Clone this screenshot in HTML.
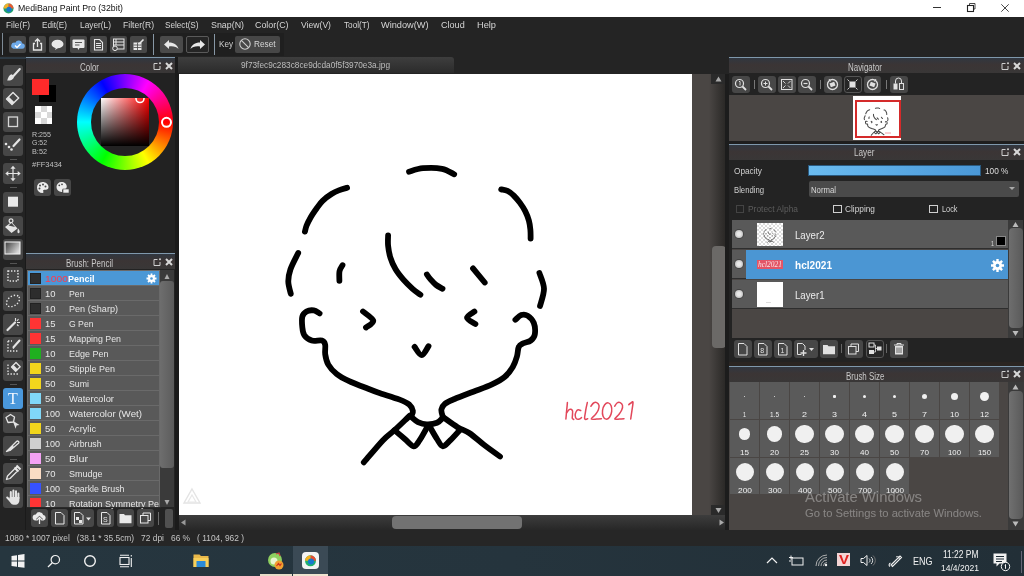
<!DOCTYPE html><html><head><meta charset="utf-8"><style>
html,body{margin:0;padding:0}
body{width:1024px;height:576px;overflow:hidden;position:relative;background:#242424;font-family:"Liberation Sans",sans-serif}
div{box-sizing:border-box}
svg{position:absolute;overflow:visible}
</style></head><body><div style="position:absolute;left:0;top:0;width:1024px;height:576px;overflow:hidden;will-change:transform;background:#242424">
<div style="position:absolute;left:0px;top:0px;width:1024px;height:17px;background:#fff"></div>
<svg style="left:3px;top:3px" width="11" height="11" viewBox="0 0 12 12"><circle cx="6" cy="6" r="5.5" fill="#22a070"/><path d="M6 .5a5.5 5.5 0 0 1 5.5 5.5H6z" fill="#e85a30"/><path d="M.5 6A5.5 5.5 0 0 1 6 .5V6z" fill="#f3b02a"/><circle cx="6.5" cy="6.8" r="2.8" fill="#1877c9"/></svg>
<div style="position:absolute;left:18px;top:2px;font-size:9.5px;line-height:12.5px;color:#111;white-space:pre;transform:scaleX(0.9205);transform-origin:0 0;">MediBang Paint Pro (32bit)</div>
<div style="position:absolute;left:933px;top:7px;width:8px;height:1px;background:#333"></div>
<svg style="left:966px;top:3px" width="10" height="10" viewBox="0 0 10 10"><path d="M3.5 2V.5h5.5v5.5H7.5" stroke="#333" stroke-width="0.9" fill="none"/><rect x="1.5" y="2.5" width="6" height="6" stroke="#222" stroke-width="1.1" fill="#fff"/></svg>
<svg style="left:1001px;top:3.5px" width="8" height="8" viewBox="0 0 8 8"><path d="M0.3 0.3L7.7 7.7M7.7 0.3L0.3 7.7" stroke="#333" stroke-width="0.9"/></svg>
<div style="position:absolute;left:0px;top:17px;width:1024px;height:40px;background:#242424"></div>
<div style="position:absolute;left:5.5px;top:18.6px;font-size:9.3px;line-height:12.3px;color:#d6d6d6;white-space:pre;transform:scaleX(0.8935);transform-origin:0 0;">File(F)</div>
<div style="position:absolute;left:41.5px;top:18.6px;font-size:9.3px;line-height:12.3px;color:#d6d6d6;white-space:pre;transform:scaleX(0.8796);transform-origin:0 0;">Edit(E)</div>
<div style="position:absolute;left:79.5px;top:18.6px;font-size:9.3px;line-height:12.3px;color:#d6d6d6;white-space:pre;transform:scaleX(0.8953);transform-origin:0 0;">Layer(L)</div>
<div style="position:absolute;left:122.5px;top:18.6px;font-size:9.3px;line-height:12.3px;color:#d6d6d6;white-space:pre;transform:scaleX(0.9232);transform-origin:0 0;">Filter(R)</div>
<div style="position:absolute;left:165.0px;top:18.6px;font-size:9.3px;line-height:12.3px;color:#d6d6d6;white-space:pre;transform:scaleX(0.8762);transform-origin:0 0;">Select(S)</div>
<div style="position:absolute;left:210.5px;top:18.6px;font-size:9.3px;line-height:12.3px;color:#d6d6d6;white-space:pre;transform:scaleX(0.9531);transform-origin:0 0;">Snap(N)</div>
<div style="position:absolute;left:255.0px;top:18.6px;font-size:9.3px;line-height:12.3px;color:#d6d6d6;white-space:pre;transform:scaleX(0.9537);transform-origin:0 0;">Color(C)</div>
<div style="position:absolute;left:300.8px;top:18.6px;font-size:9.3px;line-height:12.3px;color:#d6d6d6;white-space:pre;transform:scaleX(0.9262);transform-origin:0 0;">View(V)</div>
<div style="position:absolute;left:343.5px;top:18.6px;font-size:9.3px;line-height:12.3px;color:#d6d6d6;white-space:pre;transform:scaleX(0.8847);transform-origin:0 0;">Tool(T)</div>
<div style="position:absolute;left:381.3px;top:18.6px;font-size:9.3px;line-height:12.3px;color:#d6d6d6;white-space:pre;transform:scaleX(0.9907);transform-origin:0 0;">Window(W)</div>
<div style="position:absolute;left:441.1px;top:18.6px;font-size:9.3px;line-height:12.3px;color:#d6d6d6;white-space:pre;transform:scaleX(0.9754);transform-origin:0 0;">Cloud</div>
<div style="position:absolute;left:476.5px;top:18.6px;font-size:9.3px;line-height:12.3px;color:#d6d6d6;white-space:pre;transform:scaleX(0.9935);transform-origin:0 0;">Help</div>
<div style="position:absolute;left:0px;top:33px;width:284px;height:23px;background:#1f1f1f"></div>
<div style="position:absolute;left:2px;top:33px;width:1px;height:22px;background:#7d8a96"></div>
<div style="position:absolute;left:153px;top:34px;width:1px;height:21px;background:#8797a5"></div>
<div style="position:absolute;left:214px;top:34px;width:1px;height:21px;background:#8797a5"></div>
<div style="position:absolute;left:9px;top:36px;width:17px;height:17px;background:#474747;border-radius:2px;"></div>
<div style="position:absolute;left:29px;top:36px;width:17px;height:17px;background:#474747;border-radius:2px;"></div>
<div style="position:absolute;left:49px;top:36px;width:17px;height:17px;background:#474747;border-radius:2px;"></div>
<div style="position:absolute;left:70px;top:36px;width:17px;height:17px;background:#474747;border-radius:2px;"></div>
<div style="position:absolute;left:90px;top:36px;width:17px;height:17px;background:#474747;border-radius:2px;"></div>
<div style="position:absolute;left:110px;top:36px;width:17px;height:17px;background:#474747;border-radius:2px;"></div>
<div style="position:absolute;left:130px;top:36px;width:17px;height:17px;background:#474747;border-radius:2px;"></div>
<div style="position:absolute;left:160px;top:36px;width:23px;height:17px;background:#4a4a4a;border-radius:2px;"></div>
<div style="position:absolute;left:186px;top:36px;width:23px;height:17px;background:#252525;border-radius:2px;border:1px solid #5a5a5a"></div>
<div style="position:absolute;left:234.5px;top:36px;width:45.5px;height:17px;background:#474747;border-radius:2px;"></div>
<svg style="left:9px;top:36px" width="17" height="17" viewBox="0 0 17 17"><path d="M4.5 12.8h8.5a2.7 2.7 0 0 0 .3-5.4a3.7 3.7 0 0 0-7-.7A3 3 0 0 0 4.5 12.8z" fill="#6eaaea"/><path d="M6 9.5l2 2l3.5-3.5" stroke="#fff" stroke-width="1.4" fill="none"/></svg>
<svg style="left:29px;top:36px" width="17" height="17" viewBox="0 0 17 17"><path d="M6 7.5H4.5v6.5h8V7.5H11" stroke="#e8e8e8" stroke-width="1.3" fill="none"/><path d="M8.5 11V3M6 5.5l2.5-2.5l2.5 2.5" stroke="#e8e8e8" stroke-width="1.3" fill="none"/></svg>
<svg style="left:49px;top:36px" width="17" height="17" viewBox="0 0 17 17"><ellipse cx="8.5" cy="8" rx="6" ry="4.3" fill="#e8e8e8"/><path d="M7 11.5l-1 2.5l3-2z" fill="#e8e8e8"/></svg>
<svg style="left:70px;top:36px" width="17" height="17" viewBox="0 0 17 17"><rect x="2.5" y="3.5" width="12" height="8.5" rx="1" fill="#e8e8e8"/><path d="M7.5 12l1 2l1-2z" fill="#e8e8e8"/><path d="M5 6.5h7M5 9h4.5" stroke="#555" stroke-width="1"/></svg>
<svg style="left:90px;top:36px" width="17" height="17" viewBox="0 0 17 17"><path d="M4.5 3.5h5l3 3v7.5h-8z" stroke="#e8e8e8" stroke-width="1.1" fill="none"/><path d="M6 7.5h5M6 9.5h5M6 11.5h5" stroke="#e8e8e8" stroke-width="1"/></svg>
<svg style="left:110px;top:36px" width="17" height="17" viewBox="0 0 17 17"><rect x="3.5" y="3" width="10.5" height="10" stroke="#e8e8e8" stroke-width="1" fill="none"/><path d="M3.5 6h10.5M3.5 9h10.5M6 3v6" stroke="#e8e8e8" stroke-width="1"/><circle cx="5" cy="12.3" r="2.3" fill="#474747" stroke="#e8e8e8" stroke-width="1"/></svg>
<svg style="left:130px;top:36px" width="17" height="17" viewBox="0 0 17 17"><path d="M3.5 6.5h8v7.5h-8z" fill="#e8e8e8"/><path d="M3.5 9h8M3.5 11.5h8M7.5 6.5v7.5" stroke="#474747" stroke-width="0.8"/><path d="M9 8l4.5-4.5" stroke="#e8e8e8" stroke-width="1.6"/></svg>
<svg style="left:160px;top:36px" width="23" height="17" viewBox="0 0 23 17"><path d="M4 8.5l5-4.5v2.5c5 0 8.5 2.5 9.5 6.5c-2-2.2-5-3-9.5-2.5v2.5z" fill="#e8e8e8"/></svg>
<svg style="left:186px;top:36px" width="23" height="17" viewBox="0 0 23 17"><path d="M19 8.5l-5-4.5v2.5c-5 0-8.5 2.5-9.5 6.5c2-2.2 5-3 9.5-2.5v2.5z" fill="#e8e8e8"/></svg>
<div style="position:absolute;left:218.5px;top:37.5px;font-size:9px;line-height:12px;color:#d0d0d0;white-space:pre;transform:scaleX(0.9023);transform-origin:0 0;">Key</div>
<svg style="left:239px;top:38px" width="12" height="12" viewBox="0 0 12 12"><circle cx="6" cy="6" r="5.2" stroke="#cfcfcf" stroke-width="1.1" fill="none"/><path d="M2.4 2.4l7.2 7.2" stroke="#cfcfcf" stroke-width="1.1"/></svg>
<div style="position:absolute;left:253.5px;top:37.5px;font-size:9px;line-height:12px;color:#d8d8d8;white-space:pre;transform:scaleX(0.9143);transform-origin:0 0;">Reset</div>
<div style="position:absolute;left:0px;top:57px;width:26px;height:473px;background:#232323"></div>
<div style="position:absolute;left:0px;top:57px;width:26px;height:2px;background:#2e3a44"></div>
<div style="position:absolute;left:25px;top:59px;width:1px;height:471px;background:#1a1a1a"></div>
<div style="position:absolute;left:3px;top:65px;width:20px;height:20.5px;background:#474747;border-radius:3px"></div>
<svg style="left:3px;top:65px" width="20" height="20" viewBox="0 0 20 20"><path d="M16.8 4l-6.3 7" stroke="#e4e4e4" stroke-width="2.1" stroke-linecap="round"/><path d="M10.6 10.8l-1.8-1.5c-2 .3-3.6 2.6-4.6 6.2c2.8.3 5.2-.6 6.7-2.8z" fill="#e4e4e4"/></svg>
<div style="position:absolute;left:3px;top:88px;width:20px;height:20.5px;background:#474747;border-radius:3px"></div>
<svg style="left:3px;top:88px" width="20" height="20" viewBox="0 0 20 20"><path d="M3.5 11L10 4.5l5.7 5.5L9 16.5z" stroke="#e4e4e4" stroke-width="1.4" stroke-linejoin="round" fill="none"/><path d="M3.5 11l2.3-2.3l5.6 5.6L9 16.5z" fill="#e4e4e4"/></svg>
<div style="position:absolute;left:3px;top:111.5px;width:20px;height:20.5px;background:#474747;border-radius:3px"></div>
<svg style="left:3px;top:111.5px" width="20" height="20" viewBox="0 0 20 20"><rect x="5.5" y="5" width="9" height="9.5" stroke="#d6d6d6" stroke-width="1.3" fill="none"/></svg>
<div style="position:absolute;left:3px;top:135px;width:20px;height:20.5px;background:#474747;border-radius:3px"></div>
<svg style="left:3px;top:135px" width="20" height="20" viewBox="0 0 20 20"><path d="M16.5 4.5l-6 6.5" stroke="#e4e4e4" stroke-width="2.2" stroke-linecap="round"/><circle cx="3" cy="9" r="1.3" fill="#e4e4e4"/><circle cx="6" cy="12" r="1.3" fill="#e4e4e4"/><circle cx="8.5" cy="14.5" r="1.3" fill="#e4e4e4"/></svg>
<div style="position:absolute;left:3px;top:163px;width:20px;height:20.5px;background:#474747;border-radius:3px"></div>
<svg style="left:3px;top:163px" width="20" height="20" viewBox="0 0 20 20"><path d="M10 4v13M3.5 10.5h13" stroke="#e4e4e4" stroke-width="1.2"/><path d="M10 2.8l-2.6 3h5.2zM10 18.2l-2.6-3h5.2zM2.3 10.5l3-2.6v5.2zM17.7 10.5l-3-2.6v5.2z" fill="#e4e4e4"/></svg>
<div style="position:absolute;left:3px;top:192px;width:20px;height:20.5px;background:#474747;border-radius:3px"></div>
<svg style="left:3px;top:192px" width="20" height="20" viewBox="0 0 20 20"><rect x="5" y="4.7" width="10" height="10" fill="#eaeaea"/></svg>
<div style="position:absolute;left:3px;top:215.5px;width:20px;height:20.5px;background:#474747;border-radius:3px"></div>
<svg style="left:3px;top:215.5px" width="20" height="20" viewBox="0 0 20 20"><circle cx="8" cy="4.8" r="1.9" stroke="#e4e4e4" stroke-width="1.2" fill="none"/><path d="M2 11l6.5-5l6 6.5l-6 4.5z" fill="#e4e4e4"/><path d="M5.5 9.5l3-2.5l3.5 4z" fill="#474747"/><path d="M15 12.5c1 1 2 2.5 1.5 4c-.5 1-1.8.8-2-.3c-.2-1 .2-2.5.5-3.7z" fill="#e4e4e4"/></svg>
<div style="position:absolute;left:3px;top:239px;width:20px;height:20.5px;background:#474747;border-radius:3px"></div>
<svg style="left:3px;top:239px" width="20" height="20" viewBox="0 0 20 20"><defs><linearGradient id="gr" x1="0" y1="0" x2="1" y2="0.6"><stop offset="0" stop-color="#3a3a3a"/><stop offset="1" stop-color="#d8d8d8"/></linearGradient></defs><rect x="2" y="3" width="15" height="12" fill="url(#gr)" stroke="#eee" stroke-width="1.1"/></svg>
<div style="position:absolute;left:3px;top:267px;width:20px;height:20.5px;background:#474747;border-radius:3px"></div>
<svg style="left:3px;top:267px" width="20" height="20" viewBox="0 0 20 20"><rect x="5" y="4" width="10" height="10" stroke="#e4e4e4" stroke-width="1.4" stroke-dasharray="1.4 1.6" fill="none"/></svg>
<div style="position:absolute;left:3px;top:290.5px;width:20px;height:20.5px;background:#474747;border-radius:3px"></div>
<svg style="left:3px;top:290.5px" width="20" height="20" viewBox="0 0 20 20"><ellipse cx="10" cy="10" rx="7.2" ry="4.8" transform="rotate(-35 10 10)" stroke="#e4e4e4" stroke-width="1.4" stroke-dasharray="1.4 1.8" fill="none"/></svg>
<div style="position:absolute;left:3px;top:314px;width:20px;height:20.5px;background:#474747;border-radius:3px"></div>
<svg style="left:3px;top:314px" width="20" height="20" viewBox="0 0 20 20"><path d="M4.5 16l7.5-7.5" stroke="#e4e4e4" stroke-width="2.2" stroke-linecap="round"/><path d="M12.5 4v3M15.5 5l-1.5 2M17 8.5h-3M14 10.5l1.5 1.5" stroke="#e4e4e4" stroke-width="1.1"/></svg>
<div style="position:absolute;left:3px;top:337px;width:20px;height:20.5px;background:#474747;border-radius:3px"></div>
<svg style="left:3px;top:337px" width="20" height="20" viewBox="0 0 20 20"><path d="M5 4v10h10" stroke="#e4e4e4" stroke-width="1.3" stroke-dasharray="1.4 1.6" fill="none"/><path d="M5 4h4" stroke="#e4e4e4" stroke-width="1.3" stroke-dasharray="1.4 1.6"/><path d="M16.5 3.5l-6 6.8" stroke="#e4e4e4" stroke-width="2.1" stroke-linecap="round"/><path d="M10.3 10.5l-.6 1.5l1.5-.6z" fill="#e4e4e4"/></svg>
<div style="position:absolute;left:3px;top:360px;width:20px;height:20.5px;background:#474747;border-radius:3px"></div>
<svg style="left:3px;top:360px" width="20" height="20" viewBox="0 0 20 20"><path d="M5 4.5v9.5h10" stroke="#e4e4e4" stroke-width="1.3" stroke-dasharray="1.4 1.6" fill="none"/><path d="M8.5 7l4.5-4.5l4.2 4.2l-4.5 4.5z" stroke="#e4e4e4" stroke-width="1.3" stroke-linejoin="round" fill="none"/><path d="M8.5 7l2-2l4.2 4.2l-2 2z" fill="#e4e4e4"/></svg>
<div style="position:absolute;left:3px;top:388px;width:20px;height:20.5px;background:#4a98dc;border-radius:3px"></div>
<svg style="left:3px;top:388px" width="20" height="20" viewBox="0 0 20 20"><text x="10" y="16" text-anchor="middle" font-family="Liberation Serif" font-size="16" fill="#f4f8ff">T</text></svg>
<div style="position:absolute;left:3px;top:412px;width:20px;height:20.5px;background:#474747;border-radius:3px"></div>
<svg style="left:3px;top:412px" width="20" height="20" viewBox="0 0 20 20"><path d="M3 5.5l4.5-3l4 2.5l-1 5l-5.5.5z" stroke="#e4e4e4" stroke-width="1.3" stroke-linejoin="round" fill="none"/><path d="M9.5 8.5l7 4.5l-3 .5l-.8 3.2z" fill="#e4e4e4"/></svg>
<div style="position:absolute;left:3px;top:435.5px;width:20px;height:20.5px;background:#474747;border-radius:3px"></div>
<svg style="left:3px;top:435.5px" width="20" height="20" viewBox="0 0 20 20"><path d="M3.5 15.5l10-10c1.3-1.3 3.3.4 2 1.8L7 14.5z" stroke="#e4e4e4" stroke-width="1.3" stroke-linejoin="round" fill="none"/><path d="M3.5 15.5l6-6l1.8 1.8L7 14.5z" fill="#e4e4e4"/></svg>
<div style="position:absolute;left:3px;top:463px;width:20px;height:20.5px;background:#474747;border-radius:3px"></div>
<svg style="left:3px;top:463px" width="20" height="20" viewBox="0 0 20 20"><path d="M3.5 16.5l1-3.5l7.5-7.5l2.5 2.5l-7.5 7.5z" stroke="#e4e4e4" stroke-width="1.3" stroke-linejoin="round" fill="none"/><path d="M11.5 4.5l4 4M13.5 2.5l4 4M14.5 3.5l-2 2" stroke="#e4e4e4" stroke-width="2"/></svg>
<div style="position:absolute;left:3px;top:487px;width:20px;height:20.5px;background:#474747;border-radius:3px"></div>
<svg style="left:3px;top:487px" width="20" height="20" viewBox="0 0 20 20"><path d="M7.8 11V5M10.4 10.5V3.5M13 10.5V4.3M15.4 11.5V6.5M7 13.5L4.2 10.5" stroke="#e4e4e4" stroke-width="2" stroke-linecap="round"/><path d="M6.8 10h9.6v3.2c0 2.3-1.5 4.3-3.3 4.6h-2.5c-1.4 0-2.4-.8-3.2-2L6 13.5z" fill="#e4e4e4"/></svg>
<div style="position:absolute;left:10px;top:159px;width:7px;height:1px;background:#555"></div>
<div style="position:absolute;left:10px;top:187px;width:7px;height:1px;background:#555"></div>
<div style="position:absolute;left:10px;top:263px;width:7px;height:1px;background:#555"></div>
<div style="position:absolute;left:10px;top:384px;width:7px;height:1px;background:#555"></div>
<div style="position:absolute;left:10px;top:459px;width:7px;height:1px;background:#555"></div>
<div style="position:absolute;left:26px;top:57px;width:151px;height:1px;background:#7f98ac"></div>
<div style="position:absolute;left:26px;top:58px;width:151px;height:15px;background:linear-gradient(#313740,#3b3535 45%,#393737)"></div>
<div style="position:absolute;left:80px;top:60.5px;font-size:10px;line-height:13px;color:#c8c8c8;white-space:pre;transform:scaleX(0.7948);transform-origin:0 0;">Color</div>
<div style="position:absolute;left:26px;top:73px;width:151px;height:181px;background:#222"></div>
<svg style="left:153px;top:62px" width="20" height="8" viewBox="0 0 20 8"><path d="M4.5 1.5H1v6h6V4" stroke="#cfcfcf" stroke-width="1" fill="none"/><circle cx="7" cy="1.2" r="1" fill="#cfcfcf"/><path d="M13 1l6 6M19 1l-6 6" stroke="#d8d8d8" stroke-width="2"/></svg>
<div style="position:absolute;left:39px;top:85px;width:17px;height:17px;background:#000"></div>
<div style="position:absolute;left:32px;top:78.5px;width:16.5px;height:16px;background:#ff2a2a"></div>
<div style="position:absolute;left:35px;top:106px;width:17px;height:18px;background-color:#fff;background-image:linear-gradient(45deg,#d8d8d8 25%,transparent 25%,transparent 75%,#d8d8d8 75%),linear-gradient(45deg,#d8d8d8 25%,transparent 25%,transparent 75%,#d8d8d8 75%);background-size:12px 12px;background-position:0 0,6px 6px"></div>
<div style="position:absolute;left:32px;top:128.5px;font-size:8px;line-height:11px;color:#c0c0c0;white-space:pre;transform:scaleX(0.8895);transform-origin:0 0;">R:255</div>
<div style="position:absolute;left:32px;top:137px;font-size:8px;line-height:11px;color:#c0c0c0;white-space:pre;transform:scaleX(0.8649);transform-origin:0 0;">G:52</div>
<div style="position:absolute;left:32px;top:146px;font-size:8px;line-height:11px;color:#c0c0c0;white-space:pre;transform:scaleX(0.9108);transform-origin:0 0;">B:52</div>
<div style="position:absolute;left:32px;top:158.5px;font-size:8px;line-height:11px;color:#c0c0c0;white-space:pre;transform:scaleX(0.9366);transform-origin:0 0;">#FF3434</div>
<div style="position:absolute;left:77px;top:74px;width:96px;height:96px;border-radius:50%;background:conic-gradient(from 90deg,#f00,#ff0,#0f0,#0ff,#00f,#f0f,#f00)"></div>
<div style="position:absolute;left:91px;top:88px;width:68px;height:68px;border-radius:50%;background:#222"></div>
<div style="position:absolute;left:101px;top:98px;width:48px;height:48px;overflow:hidden;background:linear-gradient(to top,#000,rgba(0,0,0,0)),linear-gradient(to right,#fff,#f00)"><svg style="left:0;top:0" width="48" height="48"><circle cx="39" cy="0.5" r="4" stroke="#fff" stroke-width="1.6" fill="none"/></svg></div>
<svg style="left:0;top:0" width="1" height="1"><circle cx="166.5" cy="122.3" r="4.5" stroke="#fff" stroke-width="2" fill="none"/></svg>
<div style="position:absolute;left:34px;top:179px;width:17px;height:17px;background:#474747;border-radius:3px"></div>
<div style="position:absolute;left:54px;top:179px;width:17px;height:17px;background:#474747;border-radius:3px"></div>
<svg style="left:34px;top:179px" width="17" height="17" viewBox="0 0 17 17"><path d="M8.5 3a5.5 5.5 0 0 0 0 11c1 0 1.2-.8.8-1.5c-.5-.8 0-1.7 1-1.7h1.5a2.7 2.7 0 0 0 2.7-2.7C14.5 5.3 11.8 3 8.5 3z" fill="#eee"/><circle cx="6" cy="6.5" r="1" fill="#474747"/><circle cx="9" cy="5.5" r="1" fill="#474747"/><circle cx="5.5" cy="9.5" r="1" fill="#474747"/><circle cx="11.5" cy="7.5" r="1" fill="#474747"/></svg>
<svg style="left:54px;top:179px" width="17" height="17" viewBox="0 0 17 17"><path d="M7.5 3a5 5 0 0 0 0 10c.8 0 1-.7.7-1.3c-.4-.7 0-1.5.9-1.5h1.3a2.4 2.4 0 0 0 2.4-2.4C12.8 5 10.5 3 7.5 3z" fill="#eee"/><circle cx="5.3" cy="6.3" r=".9" fill="#474747"/><circle cx="8" cy="5.3" r=".9" fill="#474747"/><rect x="9" y="10" width="6" height="4" fill="#eee" stroke="#474747" stroke-width=".6"/></svg>
<div style="position:absolute;left:26px;top:253px;width:151px;height:1px;background:#7f98ac"></div>
<div style="position:absolute;left:26px;top:254px;width:151px;height:15px;background:linear-gradient(#313740,#3b3535 45%,#393737)"></div>
<div style="position:absolute;left:65.5px;top:257px;font-size:10px;line-height:13px;color:#c8c8c8;white-space:pre;transform:scaleX(0.7977);transform-origin:0 0;">Brush: Pencil</div>
<svg style="left:153px;top:258px" width="20" height="8" viewBox="0 0 20 8"><path d="M4.5 1.5H1v6h6V4" stroke="#cfcfcf" stroke-width="1" fill="none"/><circle cx="7" cy="1.2" r="1" fill="#cfcfcf"/><path d="M13 1l6 6M19 1l-6 6" stroke="#d8d8d8" stroke-width="2"/></svg>
<div style="position:absolute;left:26px;top:269px;width:151px;height:261px;background:#232323"></div>
<div style="position:absolute;left:27px;top:270px;width:133px;height:237px;background:#6a6a6a;overflow:hidden"></div>
<div style="position:absolute;left:28px;top:271px;width:131px;height:14px;background:#4b98d6;overflow:hidden"></div>
<div style="position:absolute;left:30px;top:273px;width:11px;height:11px;background:#2d2d2d;border:1px solid #222"></div>
<div style="position:absolute;left:44.5px;top:273px;font-size:9.3px;line-height:12.3px;color:#ff3a4c;white-space:pre;transform:scaleX(1.1118);transform-origin:0 0;">1000</div>
<div style="position:absolute;left:68px;top:273px;font-size:9.3px;line-height:12.3px;color:#ffffff;white-space:pre;font-weight:bold;transform:scaleX(0.9675);transform-origin:0 0;">Pencil</div>
<svg style="left:146px;top:273px" width="11" height="11" viewBox="0 0 11 11"><circle cx="5.5" cy="5.5" r="3.4" fill="#fff"/><path d="M5.5 .5v10M.5 5.5h10M2 2l7 7M9 2l-7 7" stroke="#fff" stroke-width="1.8"/><circle cx="5.5" cy="5.5" r="1.3" fill="#4b98d6"/></svg>
<div style="position:absolute;left:28px;top:286px;width:131px;height:14px;background:#595959;overflow:hidden"></div>
<div style="position:absolute;left:30px;top:288px;width:11px;height:11px;background:#2d2d2d;border:1px solid #222"></div>
<div style="position:absolute;left:44.5px;top:287.6px;font-size:9.3px;line-height:12.3px;color:#e6e6e6;white-space:pre;transform:scaleX(1.0151);transform-origin:0 0;">10</div>
<div style="position:absolute;left:68.5px;top:287.6px;font-size:9.3px;line-height:12.3px;color:#e6e6e6;white-space:pre;transform:scaleX(0.9367);transform-origin:0 0;">Pen</div>
<div style="position:absolute;left:28px;top:301px;width:131px;height:14px;background:#595959;overflow:hidden"></div>
<div style="position:absolute;left:30px;top:303px;width:11px;height:11px;background:#2d2d2d;border:1px solid #222"></div>
<div style="position:absolute;left:44.5px;top:302.6px;font-size:9.3px;line-height:12.3px;color:#e6e6e6;white-space:pre;transform:scaleX(1.0151);transform-origin:0 0;">10</div>
<div style="position:absolute;left:68.5px;top:302.6px;font-size:9.3px;line-height:12.3px;color:#e6e6e6;white-space:pre;transform:scaleX(0.9773);transform-origin:0 0;">Pen (Sharp)</div>
<div style="position:absolute;left:28px;top:316px;width:131px;height:14px;background:#595959;overflow:hidden"></div>
<div style="position:absolute;left:30px;top:318px;width:11px;height:11px;background:#ff3434"></div>
<div style="position:absolute;left:44.5px;top:317.6px;font-size:9.3px;line-height:12.3px;color:#e6e6e6;white-space:pre;transform:scaleX(1.0151);transform-origin:0 0;">15</div>
<div style="position:absolute;left:68.5px;top:317.6px;font-size:9.3px;line-height:12.3px;color:#e6e6e6;white-space:pre;transform:scaleX(0.9295);transform-origin:0 0;">G Pen</div>
<div style="position:absolute;left:28px;top:331px;width:131px;height:14px;background:#595959;overflow:hidden"></div>
<div style="position:absolute;left:30px;top:333px;width:11px;height:11px;background:#ff3434"></div>
<div style="position:absolute;left:44.5px;top:332.6px;font-size:9.3px;line-height:12.3px;color:#e6e6e6;white-space:pre;transform:scaleX(1.0151);transform-origin:0 0;">15</div>
<div style="position:absolute;left:68.5px;top:332.6px;font-size:9.3px;line-height:12.3px;color:#e6e6e6;white-space:pre;transform:scaleX(0.9490);transform-origin:0 0;">Mapping Pen</div>
<div style="position:absolute;left:28px;top:346px;width:131px;height:14px;background:#595959;overflow:hidden"></div>
<div style="position:absolute;left:30px;top:348px;width:11px;height:11px;background:#1fb01f"></div>
<div style="position:absolute;left:44.5px;top:347.6px;font-size:9.3px;line-height:12.3px;color:#e6e6e6;white-space:pre;transform:scaleX(1.0151);transform-origin:0 0;">10</div>
<div style="position:absolute;left:68.5px;top:347.6px;font-size:9.3px;line-height:12.3px;color:#e6e6e6;white-space:pre;transform:scaleX(0.9671);transform-origin:0 0;">Edge Pen</div>
<div style="position:absolute;left:28px;top:361px;width:131px;height:14px;background:#595959;overflow:hidden"></div>
<div style="position:absolute;left:30px;top:363px;width:11px;height:11px;background:#f2d61c"></div>
<div style="position:absolute;left:44.5px;top:362.6px;font-size:9.3px;line-height:12.3px;color:#e6e6e6;white-space:pre;transform:scaleX(1.0151);transform-origin:0 0;">50</div>
<div style="position:absolute;left:68.5px;top:362.6px;font-size:9.3px;line-height:12.3px;color:#e6e6e6;white-space:pre;transform:scaleX(0.9671);transform-origin:0 0;">Stipple Pen</div>
<div style="position:absolute;left:28px;top:376px;width:131px;height:14px;background:#595959;overflow:hidden"></div>
<div style="position:absolute;left:30px;top:378px;width:11px;height:11px;background:#f2d61c"></div>
<div style="position:absolute;left:44.5px;top:377.6px;font-size:9.3px;line-height:12.3px;color:#e6e6e6;white-space:pre;transform:scaleX(1.0151);transform-origin:0 0;">50</div>
<div style="position:absolute;left:68.5px;top:377.6px;font-size:9.3px;line-height:12.3px;color:#e6e6e6;white-space:pre;transform:scaleX(0.9440);transform-origin:0 0;">Sumi</div>
<div style="position:absolute;left:28px;top:391px;width:131px;height:14px;background:#595959;overflow:hidden"></div>
<div style="position:absolute;left:30px;top:393px;width:11px;height:11px;background:#80d8f8"></div>
<div style="position:absolute;left:44.5px;top:392.6px;font-size:9.3px;line-height:12.3px;color:#e6e6e6;white-space:pre;transform:scaleX(1.0151);transform-origin:0 0;">50</div>
<div style="position:absolute;left:68.5px;top:392.6px;font-size:9.3px;line-height:12.3px;color:#e6e6e6;white-space:pre;transform:scaleX(1.0088);transform-origin:0 0;">Watercolor</div>
<div style="position:absolute;left:28px;top:406px;width:131px;height:14px;background:#595959;overflow:hidden"></div>
<div style="position:absolute;left:30px;top:408px;width:11px;height:11px;background:#80d8f8"></div>
<div style="position:absolute;left:44.5px;top:407.6px;font-size:9.3px;line-height:12.3px;color:#e6e6e6;white-space:pre;transform:scaleX(0.9668);transform-origin:0 0;">100</div>
<div style="position:absolute;left:68.5px;top:407.6px;font-size:9.3px;line-height:12.3px;color:#e6e6e6;white-space:pre;transform:scaleX(1.0466);transform-origin:0 0;">Watercolor (Wet)</div>
<div style="position:absolute;left:28px;top:421px;width:131px;height:14px;background:#595959;overflow:hidden"></div>
<div style="position:absolute;left:30px;top:423px;width:11px;height:11px;background:#f2d61c"></div>
<div style="position:absolute;left:44.5px;top:422.6px;font-size:9.3px;line-height:12.3px;color:#e6e6e6;white-space:pre;transform:scaleX(1.0151);transform-origin:0 0;">50</div>
<div style="position:absolute;left:68.5px;top:422.6px;font-size:9.3px;line-height:12.3px;color:#e6e6e6;white-space:pre;transform:scaleX(0.9863);transform-origin:0 0;">Acrylic</div>
<div style="position:absolute;left:28px;top:436px;width:131px;height:14px;background:#595959;overflow:hidden"></div>
<div style="position:absolute;left:30px;top:438px;width:11px;height:11px;background:#cfcfcf"></div>
<div style="position:absolute;left:44.5px;top:437.6px;font-size:9.3px;line-height:12.3px;color:#e6e6e6;white-space:pre;transform:scaleX(0.9668);transform-origin:0 0;">100</div>
<div style="position:absolute;left:68.5px;top:437.6px;font-size:9.3px;line-height:12.3px;color:#e6e6e6;white-space:pre;transform:scaleX(0.9386);transform-origin:0 0;">Airbrush</div>
<div style="position:absolute;left:28px;top:451px;width:131px;height:14px;background:#595959;overflow:hidden"></div>
<div style="position:absolute;left:30px;top:453px;width:11px;height:11px;background:#f4a2f4"></div>
<div style="position:absolute;left:44.5px;top:452.6px;font-size:9.3px;line-height:12.3px;color:#e6e6e6;white-space:pre;transform:scaleX(1.0151);transform-origin:0 0;">50</div>
<div style="position:absolute;left:68.5px;top:452.6px;font-size:9.3px;line-height:12.3px;color:#e6e6e6;white-space:pre;transform:scaleX(1.1483);transform-origin:0 0;">Blur</div>
<div style="position:absolute;left:28px;top:466px;width:131px;height:14px;background:#595959;overflow:hidden"></div>
<div style="position:absolute;left:30px;top:468px;width:11px;height:11px;background:#fadcc4"></div>
<div style="position:absolute;left:44.5px;top:467.6px;font-size:9.3px;line-height:12.3px;color:#e6e6e6;white-space:pre;transform:scaleX(1.0151);transform-origin:0 0;">70</div>
<div style="position:absolute;left:68.5px;top:467.6px;font-size:9.3px;line-height:12.3px;color:#e6e6e6;white-space:pre;transform:scaleX(0.9671);transform-origin:0 0;">Smudge</div>
<div style="position:absolute;left:28px;top:481px;width:131px;height:14px;background:#595959;overflow:hidden"></div>
<div style="position:absolute;left:30px;top:483px;width:11px;height:11px;background:#3652ff"></div>
<div style="position:absolute;left:44.5px;top:482.6px;font-size:9.3px;line-height:12.3px;color:#e6e6e6;white-space:pre;transform:scaleX(0.9668);transform-origin:0 0;">100</div>
<div style="position:absolute;left:68.5px;top:482.6px;font-size:9.3px;line-height:12.3px;color:#e6e6e6;white-space:pre;transform:scaleX(0.9502);transform-origin:0 0;">Sparkle Brush</div>
<div style="position:absolute;left:28px;top:496px;width:131px;height:11px;background:#595959;overflow:hidden"></div>
<div style="position:absolute;left:30px;top:498px;width:11px;height:9px;background:#ff3434"></div>
<div style="position:absolute;left:44.5px;top:497.6px;font-size:9.3px;line-height:12.3px;color:#e6e6e6;white-space:pre;transform:scaleX(1.0151);transform-origin:0 0;">10</div>
<div style="position:absolute;left:68.5px;top:497.6px;font-size:9.3px;line-height:12.3px;color:#e6e6e6;white-space:pre;transform:scaleX(0.9676);transform-origin:0 0;">Rotation Symmetry Pe</div>
<div style="position:absolute;left:27px;top:507px;width:134px;height:1px;background:#2a2a2a"></div>
<div style="position:absolute;left:160px;top:270px;width:14px;height:237px;background:#3a3a3a"></div>
<svg style="left:160px;top:272px" width="14" height="8" viewBox="0 0 14 8"><path d="M4.5 7h5l-2.5-5z" fill="#aaa"/></svg>
<div style="position:absolute;left:160px;top:281px;width:13.5px;height:187px;background:linear-gradient(to right,#6e6e6e,#5c5c5c);border-radius:3px"></div>
<svg style="left:160px;top:499px" width="14" height="8" viewBox="0 0 14 8"><path d="M4.5 1h5l-2.5 5z" fill="#aaa"/></svg>
<div style="position:absolute;left:175px;top:57px;width:4px;height:473px;background:#1b1b1b"></div>
<div style="position:absolute;left:31px;top:509px;width:17px;height:18px;background:#474747;border-radius:3px"></div>
<div style="position:absolute;left:51px;top:509px;width:17px;height:18px;background:#474747;border-radius:3px"></div>
<div style="position:absolute;left:96.5px;top:509px;width:17px;height:18px;background:#474747;border-radius:3px"></div>
<div style="position:absolute;left:117px;top:509px;width:17px;height:18px;background:#474747;border-radius:3px"></div>
<div style="position:absolute;left:137px;top:509px;width:17px;height:18px;background:#474747;border-radius:3px"></div>
<div style="position:absolute;left:71px;top:509px;width:23px;height:18px;background:#474747;border-radius:3px"></div>
<svg style="left:31px;top:509px" width="17" height="18" viewBox="0 0 17 18"><path d="M4.5 11.5a3 3 0 0 1 .3-6a4 4 0 0 1 7.5.5a2.8 2.8 0 0 1 .2 5.5z" fill="#e8e8e8"/><path d="M8.5 15V8.5M6 11l2.5-2.5l2.5 2.5" stroke="#474747" stroke-width="2.6" fill="none"/><path d="M8.5 15V8.5M6 11l2.5-2.5l2.5 2.5" stroke="#e8e8e8" stroke-width="1.3" fill="none"/></svg>
<svg style="left:51px;top:509px" width="17" height="18" viewBox="0 0 17 18"><path d="M4.5 3.5h5.5l3 3v8.5h-8.5z" stroke="#e8e8e8" stroke-width="1" fill="none"/></svg>
<svg style="left:71px;top:509px" width="23" height="18" viewBox="0 0 23 18"><path d="M3.5 3.5h5.5l3 3v8.5h-8.5z" stroke="#e8e8e8" stroke-width="1" fill="none"/><rect x="5" y="8" width="3" height="3" fill="#e8e8e8"/><rect x="8" y="11" width="3" height="3" fill="#e8e8e8"/><path d="M15 8.5h5l-2.5 3z" fill="#e8e8e8"/></svg>
<svg style="left:96.5px;top:509px" width="17" height="18" viewBox="0 0 17 18"><path d="M4.5 3.5h5.5l3 3v8.5h-8.5z" stroke="#e8e8e8" stroke-width="1" fill="none"/><text x="6" y="13" font-size="7" fill="#e8e8e8" font-family="Liberation Sans">S</text></svg>
<svg style="left:117px;top:509px" width="17" height="18" viewBox="0 0 17 18"><path d="M2.5 5h4.5l1 1.3h6.5v8h-12z" fill="#e8e8e8"/></svg>
<svg style="left:137px;top:509px" width="17" height="18" viewBox="0 0 17 18"><rect x="3.5" y="6.5" width="7.5" height="7.5" stroke="#e8e8e8" stroke-width="1" fill="none"/><path d="M6 6.5V4h7.5v7.5H11" stroke="#e8e8e8" stroke-width="1" fill="none"/></svg>
<div style="position:absolute;left:158px;top:512px;width:1px;height:13px;background:#6a6a6a"></div>
<div style="position:absolute;left:165px;top:509px;width:8px;height:19px;background:#505050;border-radius:2px"></div>
<div style="position:absolute;left:179px;top:57px;width:547px;height:17px;background:#242424"></div>
<div style="position:absolute;left:178px;top:57px;width:276px;height:16px;background:linear-gradient(#3e3e3e,#2b2b2b);border-radius:0 3px 0 0"></div>
<div style="position:absolute;left:241px;top:58.5px;font-size:9px;line-height:12px;color:#bdbdbd;white-space:pre;transform:scaleX(0.9190);transform-origin:0 0;">9f73fec9c283c8ce9dcda0f5f3970e3a.jpg</div>
<div style="position:absolute;left:179px;top:74px;width:513px;height:441px;background:#fff"></div>
<div style="position:absolute;left:692px;top:74px;width:34px;height:441px;background:linear-gradient(to right,#4a4644 50%,#2c2a28 95%)"></div>
<div style="position:absolute;left:711px;top:74px;width:15px;height:10px;background:#2a2a2a"></div>
<svg style="left:711px;top:74px" width="15" height="10" viewBox="0 0 15 10"><path d="M4.5 7.5h6l-3-5z" fill="#aaa"/></svg>
<div style="position:absolute;left:711.5px;top:245.5px;width:14px;height:102px;background:#6b6967;border-radius:4px"></div>
<div style="position:absolute;left:711px;top:505px;width:15px;height:10px;background:#2a2a2a"></div>
<svg style="left:711px;top:505px" width="15" height="10" viewBox="0 0 15 10"><path d="M4.5 3h6l-3 5z" fill="#aaa"/></svg>
<div style="position:absolute;left:179px;top:515px;width:547px;height:15px;background:linear-gradient(#3d3d3d,#272727)"></div>
<div style="position:absolute;left:179px;top:529.5px;width:547px;height:1px;background:#555"></div>
<svg style="left:179px;top:515px" width="10" height="15" viewBox="0 0 10 15"><path d="M6.5 4.5v6l-4.5-3z" fill="#999"/></svg>
<svg style="left:716px;top:515px" width="10" height="15" viewBox="0 0 10 15"><path d="M3.5 4.5v6l4.5-3z" fill="#aaa"/></svg>
<div style="position:absolute;left:392px;top:516px;width:130px;height:13px;background:#727272;border-radius:4px"></div>
<div style="position:absolute;left:725px;top:74px;width:4px;height:456px;background:#1c1c1c"></div>
<svg style="left:182px;top:487px" width="20" height="18" viewBox="0 0 20 18"><path d="M10 2l8 14H2z" stroke="#e4e4e4" stroke-width="1.4" fill="none"/><path d="M10 8l4 7H6z" stroke="#e8e8e8" stroke-width="1.2" fill="none"/></svg>
<svg style="left:0;top:0" width="1024" height="576"><g fill="none" stroke="#000" stroke-width="5.8" stroke-linecap="round" stroke-linejoin="round"><path d="M347.1 187.8C345.7 188.2 341.4 189.4 338.8 190.4C336.1 191.4 334.2 192.3 331.5 194.0C328.8 195.7 325.0 198.5 322.6 200.8C320.2 203.1 318.9 205.2 316.9 208.0C314.9 210.8 312.3 214.5 310.6 217.5C308.9 220.5 307.4 223.5 306.5 225.8C305.6 228.2 305.2 230.6 304.9 231.6"/><path d="M409.0 171.7C411.3 171.1 417.5 168.7 423.0 168.2C428.5 167.7 436.8 167.7 442.0 168.8C447.2 169.8 452.2 173.4 454.2 174.3"/><path d="M501.2 189.4C502.3 189.7 505.4 189.9 507.5 190.9C509.6 191.9 511.7 193.6 513.8 195.6C515.8 197.6 518.1 200.3 520.0 202.9C521.9 205.5 523.7 208.3 525.2 211.2C526.7 214.2 528.0 217.5 528.9 220.6C529.8 223.7 530.1 227.0 530.4 230.0C530.7 233.0 530.6 237.1 530.6 238.5"/><path d="M298.2 253.0C296.9 255.8 292.0 264.7 290.4 269.5C288.8 274.3 288.2 277.6 288.3 281.7C288.4 285.8 290.4 291.8 290.8 293.8"/><path d="M342.5 265.2C342.0 266.2 340.0 268.6 339.5 271.2C339.0 273.9 339.4 279.2 339.4 280.8"/><path d="M388.1 235.4C388.1 237.1 387.7 242.1 388.1 245.8C388.5 249.5 389.1 253.7 390.4 257.6C391.6 261.5 393.4 265.6 395.6 269.3C397.8 273.0 400.6 276.4 403.4 279.7C406.2 282.9 409.8 286.3 412.6 288.8C415.4 291.3 419.1 293.7 420.4 294.7"/><path d="M426.9 274.5C427.5 275.4 429.3 278.0 430.8 279.7C432.3 281.4 434.1 283.4 436.0 284.9C437.9 286.4 441.4 288.1 442.5 288.8"/><path d="M473.0 268.4L484.7 282.5"/><path d="M539.4 273.0C540.2 275.6 543.9 283.2 544.0 288.8C544.1 294.2 540.7 303.1 540.0 306.0"/><path d="M363.0 311.5C364.7 313.1 372.8 318.1 373.3 320.8C373.8 323.5 367.2 326.4 366.0 327.5"/><path d="M474.4 311.5C473.2 312.5 466.8 315.6 467.0 317.7C467.2 319.8 474.0 322.9 475.4 324.0"/><path d="M414.6 346.9C415.8 348.3 419.4 355.3 421.7 355.2C424.0 355.1 427.4 347.7 428.5 346.2"/><path d="M319.6 313.5C318.6 313.0 315.9 310.7 313.8 310.4C311.6 310.1 308.4 310.4 306.5 311.5C304.6 312.6 303.0 314.1 302.3 316.7C301.6 319.3 302.0 323.9 302.3 327.0C302.6 330.1 302.8 333.1 304.4 335.4C306.0 337.7 308.8 339.7 311.7 340.6C314.6 341.5 319.8 339.9 322.0 340.6C324.2 341.3 324.7 342.5 325.2 344.8C325.7 347.1 324.7 350.9 325.2 354.2C325.7 357.5 326.4 361.3 328.3 364.6C330.2 367.9 333.2 371.2 336.7 374.0C340.2 376.8 344.5 379.0 349.2 381.2C353.9 383.5 360.2 385.6 365.0 387.5C369.8 389.4 372.3 390.5 378.0 392.5C383.7 394.5 393.8 397.4 399.0 399.4C404.2 401.4 406.9 402.6 409.2 404.5C411.5 406.4 412.5 409.2 412.9 411.1C413.3 413.0 411.6 415.2 411.4 416.0"/><path d="M411.4 417.0C412.5 417.9 415.4 420.9 418.0 422.1C420.6 423.3 423.6 424.2 426.8 424.3C430.0 424.4 434.3 423.9 437.0 422.8C439.7 421.7 441.9 418.6 442.9 417.7"/><path d="M442.9 417.0C442.6 415.8 441.0 411.8 441.4 409.6C441.8 407.4 442.8 405.6 445.0 403.8C447.2 402.0 449.9 401.0 454.6 399.0C459.3 397.0 467.1 394.1 473.3 391.7C479.5 389.3 486.8 386.8 492.0 384.4C497.2 381.9 501.1 379.9 504.6 377.0C508.1 374.1 510.8 370.2 512.9 366.7C515.0 363.2 516.0 359.6 517.0 356.2C518.0 352.9 517.7 349.1 518.8 346.9C519.8 344.7 521.3 344.4 523.3 343.3C525.3 342.2 528.7 342.1 530.6 340.6C532.5 339.1 534.3 337.3 534.8 334.4C535.3 331.4 535.0 326.0 533.8 322.9C532.5 319.8 529.6 316.9 527.5 315.6C525.4 314.3 523.3 314.3 521.2 315.0C519.2 315.7 516.4 319.0 515.4 319.8"/><path d="M363.8 462.4C367.0 458.7 377.7 445.8 382.8 440.4C387.9 435.0 390.0 434.3 394.5 430.2C399.0 426.1 407.4 417.9 410.0 415.5"/><path d="M394.5 430.2C396.2 431.7 401.6 436.3 404.8 439.0C408.0 441.7 411.2 446.1 413.6 446.3C416.1 446.5 417.2 443.7 419.5 440.4C421.8 437.1 426.2 428.8 427.5 426.5"/><path d="M429.7 426.5C430.9 428.6 434.8 435.7 437.0 439.0C439.2 442.3 440.7 446.1 442.9 446.3C445.1 446.5 447.4 443.1 450.2 440.4C453.0 437.7 458.1 431.9 459.7 430.2"/><path d="M442.9 417.0C445.3 418.7 453.1 424.5 457.5 427.2C461.9 429.9 464.9 430.1 469.2 433.0C473.6 435.9 478.8 440.9 483.9 444.8C489.0 448.7 497.3 454.6 500.0 456.5"/></g></svg>
<svg style="left:0;top:0" width="1024" height="576"><g fill="none" stroke="#e2475a" stroke-width="1.5" stroke-linecap="round" stroke-linejoin="round"><path d="M567.4 402.6C567.3 404.0 566.9 408.3 566.6 411.0C566.4 413.7 566.0 417.7 565.9 419.0"/><path d="M566.6 412.8C567.0 412.3 568.3 410.3 569.0 409.7C569.7 409.1 570.4 409.1 571.0 409.3C571.6 409.5 572.2 409.9 572.5 410.8C572.8 411.7 572.5 413.5 572.5 414.8C572.5 416.0 572.1 417.5 572.3 418.3C572.5 419.1 573.5 419.2 573.7 419.4"/><path d="M580.7 410.5C580.2 410.4 578.8 409.4 578.0 409.7C577.2 409.9 576.5 411.0 576.0 412.0C575.5 413.0 575.1 414.4 575.2 415.5C575.3 416.6 575.7 418.1 576.4 418.7C577.1 419.3 578.6 419.2 579.5 419.0C580.4 418.8 581.2 417.8 581.5 417.5"/><path d="M587.3 402.6C587.1 403.5 586.6 405.7 586.2 407.7C585.8 409.7 585.3 413.0 585.0 414.8C584.7 416.5 584.5 417.5 584.6 418.3C584.7 419.1 585.3 419.3 585.8 419.4C586.3 419.5 587.4 418.8 587.7 418.7"/><path d="M590.9 406.2C591.4 405.7 592.6 403.6 593.6 403.0C594.6 402.4 595.8 402.2 596.7 402.6C597.6 403.0 598.7 404.2 599.0 405.4C599.3 406.6 598.9 408.4 598.3 410.0C597.7 411.6 596.4 413.2 595.2 414.8C594.0 416.2 591.0 418.3 591.2 419.0C591.5 419.7 595.0 419.1 596.7 419.0C598.4 418.9 600.6 418.8 601.4 418.7"/><path d="M614.7 406.2C615.1 405.7 616.1 403.6 617.0 403.0C617.9 402.4 619.3 402.2 620.2 402.6C621.1 403.0 622.2 404.2 622.5 405.4C622.8 406.6 622.4 408.4 621.7 410.0C621.1 411.6 619.8 413.2 618.6 414.8C617.4 416.2 614.6 418.3 614.7 419.0C614.8 419.7 617.9 419.1 619.4 419.0C620.9 418.9 623.2 418.8 624.0 418.7"/><path d="M628.8 404.6C629.1 404.3 630.3 403.4 631.0 403.0C631.7 402.6 632.9 400.9 633.0 402.2C633.1 403.6 632.3 408.0 631.9 410.8C631.5 413.6 630.9 417.6 630.7 419.0"/><ellipse cx="607.1" cy="411" rx="4.6" ry="8.2" transform="rotate(8 607.1 411)"/></g></svg>
<div style="position:absolute;left:729px;top:57px;width:295px;height:473px;background:#232323"></div>
<div style="position:absolute;left:729px;top:57px;width:295px;height:1px;background:#7f98ac"></div>
<div style="position:absolute;left:729px;top:58px;width:295px;height:15px;background:linear-gradient(#313740,#3b3535 45%,#393737)"></div>
<div style="position:absolute;left:847.5px;top:60.5px;font-size:10px;line-height:13px;color:#c8c8c8;white-space:pre;transform:scaleX(0.7942);transform-origin:0 0;">Navigator</div>
<svg style="left:1001px;top:62px" width="20" height="8" viewBox="0 0 20 8"><path d="M4.5 1.5H1v6h6V4" stroke="#cfcfcf" stroke-width="1" fill="none"/><circle cx="7" cy="1.2" r="1" fill="#cfcfcf"/><path d="M13 1l6 6M19 1l-6 6" stroke="#d8d8d8" stroke-width="2"/></svg>
<div style="position:absolute;left:732px;top:76px;width:17.5px;height:17px;background:#474747;border-radius:3px;"></div>
<div style="position:absolute;left:758px;top:76px;width:17.5px;height:17px;background:#474747;border-radius:3px;"></div>
<div style="position:absolute;left:778.3px;top:76px;width:17.5px;height:17px;background:#474747;border-radius:3px;"></div>
<div style="position:absolute;left:798.3px;top:76px;width:17.5px;height:17px;background:#474747;border-radius:3px;"></div>
<div style="position:absolute;left:824px;top:76px;width:17.5px;height:17px;background:#474747;border-radius:3px;"></div>
<div style="position:absolute;left:863.9px;top:76px;width:17.5px;height:17px;background:#474747;border-radius:3px;"></div>
<div style="position:absolute;left:890.3px;top:76px;width:17.5px;height:17px;background:#474747;border-radius:3px;"></div>
<div style="position:absolute;left:844.4px;top:76px;width:17.5px;height:17px;background:#262626;border-radius:3px;border:1px solid #555"></div>
<div style="position:absolute;left:753.5px;top:80px;width:1px;height:9px;background:#777"></div>
<div style="position:absolute;left:819.5px;top:80px;width:1px;height:9px;background:#777"></div>
<div style="position:absolute;left:885.5px;top:80px;width:1px;height:9px;background:#777"></div>
<svg style="left:732px;top:76px" width="18" height="17" viewBox="0 0 18 17"><circle cx="7.5" cy="7.5" r="4" stroke="#e0e0e0" stroke-width="1.2" fill="none"/><path d="M10.5 10.5l3.5 3.5" stroke="#e0e0e0" stroke-width="1.8"/><path d="M7 5.5h1v4" stroke="#e0e0e0" stroke-width="1"/></svg>
<svg style="left:758px;top:76px" width="18" height="17" viewBox="0 0 18 17"><circle cx="7.5" cy="7.5" r="4" stroke="#e0e0e0" stroke-width="1.2" fill="none"/><path d="M10.5 10.5l3.5 3.5" stroke="#e0e0e0" stroke-width="1.8"/><path d="M5.5 7.5h4M7.5 5.5v4" stroke="#e0e0e0" stroke-width="1"/></svg>
<svg style="left:778.3px;top:76px" width="18" height="17" viewBox="0 0 18 17"><rect x="3.5" y="3.5" width="10.5" height="10" stroke="#e0e0e0" stroke-width="1" fill="none"/><path d="M5 5l2.5 2.5M12.5 5L10 7.5M5 12l2.5-2.5M12.5 12L10 9.5" stroke="#e0e0e0" stroke-width="0.9"/></svg>
<svg style="left:798.3px;top:76px" width="18" height="17" viewBox="0 0 18 17"><circle cx="7.5" cy="7.5" r="4" stroke="#e0e0e0" stroke-width="1.2" fill="none"/><path d="M10.5 10.5l3.5 3.5" stroke="#e0e0e0" stroke-width="1.8"/><path d="M5.5 7.5h4" stroke="#e0e0e0" stroke-width="1.2"/></svg>
<svg style="left:824px;top:76px" width="17" height="17" viewBox="0 0 17 17"><circle cx="8.5" cy="8.5" r="5" stroke="#e0e0e0" stroke-width="1.3" fill="none"/><rect x="6" y="6.5" width="5" height="4" transform="rotate(-20 8.5 8.5)" fill="#e0e0e0"/><path d="M5 3l1.5 2.5" stroke="#e0e0e0" stroke-width="1"/></svg>
<svg style="left:844.4px;top:76px" width="17" height="17" viewBox="0 0 17 17"><rect x="5.5" y="5.5" width="6" height="6" fill="#e0e0e0"/><path d="M3.5 3.5l1.8 1.8M13.5 3.5l-1.8 1.8M3.5 13.5l1.8-1.8M13.5 13.5l-1.8-1.8" stroke="#e0e0e0" stroke-width="0.9"/></svg>
<svg style="left:863.9px;top:76px" width="17" height="17" viewBox="0 0 17 17"><circle cx="8.5" cy="8.5" r="5" stroke="#e0e0e0" stroke-width="1.3" fill="none"/><rect x="6" y="6.5" width="5" height="4" transform="rotate(20 8.5 8.5)" fill="#e0e0e0"/><path d="M12 3l-1.5 2.5" stroke="#e0e0e0" stroke-width="1"/></svg>
<svg style="left:890.3px;top:76px" width="17" height="17" viewBox="0 0 17 17"><rect x="3.5" y="7.5" width="4" height="6" fill="#e0e0e0"/><rect x="9.5" y="7.5" width="4" height="6" stroke="#e0e0e0" stroke-width="1" fill="none"/><path d="M5.5 7.5V5a3 3 0 0 1 6 0v2.5" stroke="#e0e0e0" stroke-width="1" fill="none"/></svg>
<div style="position:absolute;left:729px;top:95px;width:295px;height:46px;background:#4a4644"></div>
<div style="position:absolute;left:853px;top:96px;width:47.5px;height:44px;background:#fff"></div>
<div style="position:absolute;left:855px;top:100px;width:46px;height:38px;border:2px solid #d42a2a"></div>
<svg style="left:853px;top:96px" width="47" height="44" viewBox="0 0 47 44"><g transform="translate(-15.6 -3.7) scale(0.093)" fill="none" stroke="#4a4a4a" stroke-width="11" stroke-linecap="round"><path d="M347.1 187.8C345.7 188.2 341.4 189.4 338.8 190.4C336.1 191.4 334.2 192.3 331.5 194.0C328.8 195.7 325.0 198.5 322.6 200.8C320.2 203.1 318.9 205.2 316.9 208.0C314.9 210.8 312.3 214.5 310.6 217.5C308.9 220.5 307.4 223.5 306.5 225.8C305.6 228.2 305.2 230.6 304.9 231.6"/><path d="M409.0 171.7C411.3 171.1 417.5 168.7 423.0 168.2C428.5 167.7 436.8 167.7 442.0 168.8C447.2 169.8 452.2 173.4 454.2 174.3"/><path d="M501.2 189.4C502.3 189.7 505.4 189.9 507.5 190.9C509.6 191.9 511.7 193.6 513.8 195.6C515.8 197.6 518.1 200.3 520.0 202.9C521.9 205.5 523.7 208.3 525.2 211.2C526.7 214.2 528.0 217.5 528.9 220.6C529.8 223.7 530.1 227.0 530.4 230.0C530.7 233.0 530.6 237.1 530.6 238.5"/><path d="M298.2 253.0C296.9 255.8 292.0 264.7 290.4 269.5C288.8 274.3 288.2 277.6 288.3 281.7C288.4 285.8 290.4 291.8 290.8 293.8"/><path d="M342.5 265.2C342.0 266.2 340.0 268.6 339.5 271.2C339.0 273.9 339.4 279.2 339.4 280.8"/><path d="M388.1 235.4C388.1 237.1 387.7 242.1 388.1 245.8C388.5 249.5 389.1 253.7 390.4 257.6C391.6 261.5 393.4 265.6 395.6 269.3C397.8 273.0 400.6 276.4 403.4 279.7C406.2 282.9 409.8 286.3 412.6 288.8C415.4 291.3 419.1 293.7 420.4 294.7"/><path d="M426.9 274.5C427.5 275.4 429.3 278.0 430.8 279.7C432.3 281.4 434.1 283.4 436.0 284.9C437.9 286.4 441.4 288.1 442.5 288.8"/><path d="M473.0 268.4L484.7 282.5"/><path d="M539.4 273.0C540.2 275.6 543.9 283.2 544.0 288.8C544.1 294.2 540.7 303.1 540.0 306.0"/><path d="M363.0 311.5C364.7 313.1 372.8 318.1 373.3 320.8C373.8 323.5 367.2 326.4 366.0 327.5"/><path d="M474.4 311.5C473.2 312.5 466.8 315.6 467.0 317.7C467.2 319.8 474.0 322.9 475.4 324.0"/><path d="M414.6 346.9C415.8 348.3 419.4 355.3 421.7 355.2C424.0 355.1 427.4 347.7 428.5 346.2"/><path d="M319.6 313.5C318.6 313.0 315.9 310.7 313.8 310.4C311.6 310.1 308.4 310.4 306.5 311.5C304.6 312.6 303.0 314.1 302.3 316.7C301.6 319.3 302.0 323.9 302.3 327.0C302.6 330.1 302.8 333.1 304.4 335.4C306.0 337.7 308.8 339.7 311.7 340.6C314.6 341.5 319.8 339.9 322.0 340.6C324.2 341.3 324.7 342.5 325.2 344.8C325.7 347.1 324.7 350.9 325.2 354.2C325.7 357.5 326.4 361.3 328.3 364.6C330.2 367.9 333.2 371.2 336.7 374.0C340.2 376.8 344.5 379.0 349.2 381.2C353.9 383.5 360.2 385.6 365.0 387.5C369.8 389.4 372.3 390.5 378.0 392.5C383.7 394.5 393.8 397.4 399.0 399.4C404.2 401.4 406.9 402.6 409.2 404.5C411.5 406.4 412.5 409.2 412.9 411.1C413.3 413.0 411.6 415.2 411.4 416.0"/><path d="M411.4 417.0C412.5 417.9 415.4 420.9 418.0 422.1C420.6 423.3 423.6 424.2 426.8 424.3C430.0 424.4 434.3 423.9 437.0 422.8C439.7 421.7 441.9 418.6 442.9 417.7"/><path d="M442.9 417.0C442.6 415.8 441.0 411.8 441.4 409.6C441.8 407.4 442.8 405.6 445.0 403.8C447.2 402.0 449.9 401.0 454.6 399.0C459.3 397.0 467.1 394.1 473.3 391.7C479.5 389.3 486.8 386.8 492.0 384.4C497.2 381.9 501.1 379.9 504.6 377.0C508.1 374.1 510.8 370.2 512.9 366.7C515.0 363.2 516.0 359.6 517.0 356.2C518.0 352.9 517.7 349.1 518.8 346.9C519.8 344.7 521.3 344.4 523.3 343.3C525.3 342.2 528.7 342.1 530.6 340.6C532.5 339.1 534.3 337.3 534.8 334.4C535.3 331.4 535.0 326.0 533.8 322.9C532.5 319.8 529.6 316.9 527.5 315.6C525.4 314.3 523.3 314.3 521.2 315.0C519.2 315.7 516.4 319.0 515.4 319.8"/><path d="M363.8 462.4C367.0 458.7 377.7 445.8 382.8 440.4C387.9 435.0 390.0 434.3 394.5 430.2C399.0 426.1 407.4 417.9 410.0 415.5"/><path d="M394.5 430.2C396.2 431.7 401.6 436.3 404.8 439.0C408.0 441.7 411.2 446.1 413.6 446.3C416.1 446.5 417.2 443.7 419.5 440.4C421.8 437.1 426.2 428.8 427.5 426.5"/><path d="M429.7 426.5C430.9 428.6 434.8 435.7 437.0 439.0C439.2 442.3 440.7 446.1 442.9 446.3C445.1 446.5 447.4 443.1 450.2 440.4C453.0 437.7 458.1 431.9 459.7 430.2"/><path d="M442.9 417.0C445.3 418.7 453.1 424.5 457.5 427.2C461.9 429.9 464.9 430.1 469.2 433.0C473.6 435.9 478.8 440.9 483.9 444.8C489.0 448.7 497.3 454.6 500.0 456.5"/></g><path d="M32 37h6" stroke="#f4a0a8" stroke-width="1"/></svg>
<div style="position:absolute;left:729px;top:141px;width:295px;height:3px;background:#1e1e1e"></div>
<div style="position:absolute;left:729px;top:144px;width:295px;height:1px;background:#7f98ac"></div>
<div style="position:absolute;left:729px;top:145px;width:295px;height:15px;background:linear-gradient(#313740,#3b3535 45%,#393737)"></div>
<div style="position:absolute;left:854px;top:146px;font-size:10px;line-height:13px;color:#c8c8c8;white-space:pre;transform:scaleX(0.8195);transform-origin:0 0;">Layer</div>
<svg style="left:1001px;top:148px" width="20" height="8" viewBox="0 0 20 8"><path d="M4.5 1.5H1v6h6V4" stroke="#cfcfcf" stroke-width="1" fill="none"/><circle cx="7" cy="1.2" r="1" fill="#cfcfcf"/><path d="M13 1l6 6M19 1l-6 6" stroke="#d8d8d8" stroke-width="2"/></svg>
<div style="position:absolute;left:729px;top:160px;width:295px;height:206px;background:#232323"></div>
<div style="position:absolute;left:733.5px;top:165px;font-size:9px;line-height:12px;color:#cfcfcf;white-space:pre;transform:scaleX(0.9176);transform-origin:0 0;">Opacity</div>
<div style="position:absolute;left:807.5px;top:164.5px;width:173px;height:11.5px;background:linear-gradient(to right,#6bbcf0,#4a98d8);border:1px solid #2a5a80"></div>
<div style="position:absolute;left:985px;top:165px;font-size:9px;line-height:12px;color:#dcdcdc;white-space:pre;transform:scaleX(0.9204);transform-origin:0 0;">100 %</div>
<div style="position:absolute;left:733.5px;top:183.5px;font-size:9px;line-height:12px;color:#cfcfcf;white-space:pre;transform:scaleX(0.8564);transform-origin:0 0;">Blending</div>
<div style="position:absolute;left:809px;top:181px;width:210px;height:15.5px;background:#4a4a4a;border-radius:2px"></div>
<div style="position:absolute;left:810.5px;top:183.5px;font-size:9px;line-height:12px;color:#d8d8d8;white-space:pre;transform:scaleX(0.8616);transform-origin:0 0;">Normal</div>
<svg style="left:1008px;top:186px" width="8" height="5" viewBox="0 0 8 5"><path d="M1 1h6l-3 3z" fill="#aaa"/></svg>
<div style="position:absolute;left:736px;top:205px;width:7.5px;height:8px;border:1px solid #444"></div>
<div style="position:absolute;left:748px;top:202.5px;font-size:9px;line-height:12px;color:#5c5c5c;white-space:pre;transform:scaleX(0.9338);transform-origin:0 0;">Protect Alpha</div>
<div style="position:absolute;left:832.5px;top:204.5px;width:9px;height:8.5px;border:1px solid #cfcfcf"></div>
<div style="position:absolute;left:845px;top:202.5px;font-size:9px;line-height:12px;color:#d4d4d4;white-space:pre;transform:scaleX(0.9222);transform-origin:0 0;">Clipping</div>
<div style="position:absolute;left:929px;top:204.5px;width:9px;height:8.5px;border:1px solid #cfcfcf"></div>
<div style="position:absolute;left:941.5px;top:202.5px;font-size:9px;line-height:12px;color:#d4d4d4;white-space:pre;transform:scaleX(0.8151);transform-origin:0 0;">Lock</div>
<div style="position:absolute;left:732px;top:220px;width:276px;height:118px;background:#4a4644"></div>
<div style="position:absolute;left:732px;top:220px;width:276px;height:29px;background:#595959;border-bottom:1px solid #2e2e2e"></div>
<div style="position:absolute;left:734.5px;top:230px;width:8px;height:8px;border-radius:50%;background:radial-gradient(#e8e8e8 30%,#b0b0b0 90%);box-shadow:0 0 0 1px #444"></div>
<div style="position:absolute;left:732px;top:250px;width:276px;height:29px;background:#595959;border-bottom:1px solid #2e2e2e"></div>
<div style="position:absolute;left:746px;top:250px;width:262px;height:29px;background:#4b96d3"></div>
<div style="position:absolute;left:734.5px;top:260px;width:8px;height:8px;border-radius:50%;background:radial-gradient(#e8e8e8 30%,#b0b0b0 90%);box-shadow:0 0 0 1px #444"></div>
<div style="position:absolute;left:732px;top:280px;width:276px;height:29px;background:#595959;border-bottom:1px solid #2e2e2e"></div>
<div style="position:absolute;left:734.5px;top:290px;width:8px;height:8px;border-radius:50%;background:radial-gradient(#e8e8e8 30%,#b0b0b0 90%);box-shadow:0 0 0 1px #444"></div>
<div style="position:absolute;left:757px;top:223px;width:26px;height:23px;background-color:#fff;background-image:linear-gradient(45deg,#ddd 25%,transparent 25%,transparent 75%,#ddd 75%),linear-gradient(45deg,#ddd 25%,transparent 25%,transparent 75%,#ddd 75%);background-size:4px 4px;background-position:0 0,2px 2px"></div>
<svg style="left:757px;top:222px" width="26" height="25" viewBox="0 0 26 25"><g transform="translate(-7.3 -1.45) scale(0.048)" fill="none" stroke="#555" stroke-width="18"><path d="M347.1 187.8C345.7 188.2 341.4 189.4 338.8 190.4C336.1 191.4 334.2 192.3 331.5 194.0C328.8 195.7 325.0 198.5 322.6 200.8C320.2 203.1 318.9 205.2 316.9 208.0C314.9 210.8 312.3 214.5 310.6 217.5C308.9 220.5 307.4 223.5 306.5 225.8C305.6 228.2 305.2 230.6 304.9 231.6"/><path d="M409.0 171.7C411.3 171.1 417.5 168.7 423.0 168.2C428.5 167.7 436.8 167.7 442.0 168.8C447.2 169.8 452.2 173.4 454.2 174.3"/><path d="M501.2 189.4C502.3 189.7 505.4 189.9 507.5 190.9C509.6 191.9 511.7 193.6 513.8 195.6C515.8 197.6 518.1 200.3 520.0 202.9C521.9 205.5 523.7 208.3 525.2 211.2C526.7 214.2 528.0 217.5 528.9 220.6C529.8 223.7 530.1 227.0 530.4 230.0C530.7 233.0 530.6 237.1 530.6 238.5"/><path d="M298.2 253.0C296.9 255.8 292.0 264.7 290.4 269.5C288.8 274.3 288.2 277.6 288.3 281.7C288.4 285.8 290.4 291.8 290.8 293.8"/><path d="M342.5 265.2C342.0 266.2 340.0 268.6 339.5 271.2C339.0 273.9 339.4 279.2 339.4 280.8"/><path d="M388.1 235.4C388.1 237.1 387.7 242.1 388.1 245.8C388.5 249.5 389.1 253.7 390.4 257.6C391.6 261.5 393.4 265.6 395.6 269.3C397.8 273.0 400.6 276.4 403.4 279.7C406.2 282.9 409.8 286.3 412.6 288.8C415.4 291.3 419.1 293.7 420.4 294.7"/><path d="M426.9 274.5C427.5 275.4 429.3 278.0 430.8 279.7C432.3 281.4 434.1 283.4 436.0 284.9C437.9 286.4 441.4 288.1 442.5 288.8"/><path d="M473.0 268.4L484.7 282.5"/><path d="M539.4 273.0C540.2 275.6 543.9 283.2 544.0 288.8C544.1 294.2 540.7 303.1 540.0 306.0"/><path d="M363.0 311.5C364.7 313.1 372.8 318.1 373.3 320.8C373.8 323.5 367.2 326.4 366.0 327.5"/><path d="M474.4 311.5C473.2 312.5 466.8 315.6 467.0 317.7C467.2 319.8 474.0 322.9 475.4 324.0"/><path d="M414.6 346.9C415.8 348.3 419.4 355.3 421.7 355.2C424.0 355.1 427.4 347.7 428.5 346.2"/><path d="M319.6 313.5C318.6 313.0 315.9 310.7 313.8 310.4C311.6 310.1 308.4 310.4 306.5 311.5C304.6 312.6 303.0 314.1 302.3 316.7C301.6 319.3 302.0 323.9 302.3 327.0C302.6 330.1 302.8 333.1 304.4 335.4C306.0 337.7 308.8 339.7 311.7 340.6C314.6 341.5 319.8 339.9 322.0 340.6C324.2 341.3 324.7 342.5 325.2 344.8C325.7 347.1 324.7 350.9 325.2 354.2C325.7 357.5 326.4 361.3 328.3 364.6C330.2 367.9 333.2 371.2 336.7 374.0C340.2 376.8 344.5 379.0 349.2 381.2C353.9 383.5 360.2 385.6 365.0 387.5C369.8 389.4 372.3 390.5 378.0 392.5C383.7 394.5 393.8 397.4 399.0 399.4C404.2 401.4 406.9 402.6 409.2 404.5C411.5 406.4 412.5 409.2 412.9 411.1C413.3 413.0 411.6 415.2 411.4 416.0"/><path d="M411.4 417.0C412.5 417.9 415.4 420.9 418.0 422.1C420.6 423.3 423.6 424.2 426.8 424.3C430.0 424.4 434.3 423.9 437.0 422.8C439.7 421.7 441.9 418.6 442.9 417.7"/><path d="M442.9 417.0C442.6 415.8 441.0 411.8 441.4 409.6C441.8 407.4 442.8 405.6 445.0 403.8C447.2 402.0 449.9 401.0 454.6 399.0C459.3 397.0 467.1 394.1 473.3 391.7C479.5 389.3 486.8 386.8 492.0 384.4C497.2 381.9 501.1 379.9 504.6 377.0C508.1 374.1 510.8 370.2 512.9 366.7C515.0 363.2 516.0 359.6 517.0 356.2C518.0 352.9 517.7 349.1 518.8 346.9C519.8 344.7 521.3 344.4 523.3 343.3C525.3 342.2 528.7 342.1 530.6 340.6C532.5 339.1 534.3 337.3 534.8 334.4C535.3 331.4 535.0 326.0 533.8 322.9C532.5 319.8 529.6 316.9 527.5 315.6C525.4 314.3 523.3 314.3 521.2 315.0C519.2 315.7 516.4 319.0 515.4 319.8"/><path d="M363.8 462.4C367.0 458.7 377.7 445.8 382.8 440.4C387.9 435.0 390.0 434.3 394.5 430.2C399.0 426.1 407.4 417.9 410.0 415.5"/><path d="M394.5 430.2C396.2 431.7 401.6 436.3 404.8 439.0C408.0 441.7 411.2 446.1 413.6 446.3C416.1 446.5 417.2 443.7 419.5 440.4C421.8 437.1 426.2 428.8 427.5 426.5"/><path d="M429.7 426.5C430.9 428.6 434.8 435.7 437.0 439.0C439.2 442.3 440.7 446.1 442.9 446.3C445.1 446.5 447.4 443.1 450.2 440.4C453.0 437.7 458.1 431.9 459.7 430.2"/><path d="M442.9 417.0C445.3 418.7 453.1 424.5 457.5 427.2C461.9 429.9 464.9 430.1 469.2 433.0C473.6 435.9 478.8 440.9 483.9 444.8C489.0 448.7 497.3 454.6 500.0 456.5"/></g></svg>
<div style="position:absolute;left:757px;top:260px;width:26px;height:8.5px;background:#e25566"></div>
<div style="position:absolute;left:758px;top:257.8px;font-size:9px;line-height:12px;color:#fbe0e4;white-space:pre;font-family:'Liberation Serif';transform:scaleX(0.8276);transform-origin:0 0;font-style:italic;">hcl2021</div>
<div style="position:absolute;left:757px;top:282px;width:26px;height:25px;background:#fff"></div>
<div style="position:absolute;left:766px;top:302px;width:5px;height:1px;background:#ddd"></div>
<div style="position:absolute;left:795px;top:228px;font-size:11px;line-height:14px;color:#ececec;white-space:pre;transform:scaleX(0.8769);transform-origin:0 0;">Layer2</div>
<div style="position:absolute;left:795px;top:258px;font-size:11px;line-height:14px;color:#ffffff;white-space:pre;font-weight:bold;transform:scaleX(0.9164);transform-origin:0 0;">hcl2021</div>
<div style="position:absolute;left:795px;top:288px;font-size:11px;line-height:14px;color:#ececec;white-space:pre;transform:scaleX(0.8769);transform-origin:0 0;">Layer1</div>
<div style="position:absolute;left:991px;top:237.5px;font-size:8px;line-height:11px;color:#dcdcdc;white-space:pre;transform:scaleX(0.6737);transform-origin:0 0;">1</div>
<div style="position:absolute;left:996px;top:236px;width:10px;height:10px;background:#000;border:1px solid #888"></div>
<svg style="left:990px;top:258px" width="15" height="15" viewBox="0 0 15 15"><circle cx="7.5" cy="7.5" r="4.6" fill="#fff"/><path d="M7.5 1v13M1 7.5h13M2.9 2.9l9.2 9.2M12.1 2.9l-9.2 9.2" stroke="#fff" stroke-width="2.4"/><circle cx="7.5" cy="7.5" r="1.8" fill="#4b96d3"/></svg>
<div style="position:absolute;left:1008px;top:220px;width:15px;height:118px;background:#3a3a3a"></div>
<svg style="left:1008px;top:220px" width="15" height="8" viewBox="0 0 15 8"><path d="M4.5 7h6l-3-5z" fill="#bbb"/></svg>
<div style="position:absolute;left:1008.5px;top:228px;width:14px;height:100px;background:linear-gradient(to right,#6e6e6e,#5a5a5a);border-radius:4px"></div>
<svg style="left:1008px;top:330px" width="15" height="8" viewBox="0 0 15 8"><path d="M4.5 1h6l-3 5z" fill="#bbb"/></svg>
<div style="position:absolute;left:729px;top:338px;width:295px;height:24px;background:#232323"></div>
<div style="position:absolute;left:734px;top:340px;width:17.5px;height:18px;background:#474747;border-radius:3px;"></div>
<div style="position:absolute;left:754px;top:340px;width:17.5px;height:18px;background:#474747;border-radius:3px;"></div>
<div style="position:absolute;left:774px;top:340px;width:17.5px;height:18px;background:#474747;border-radius:3px;"></div>
<div style="position:absolute;left:820px;top:340px;width:17.5px;height:18px;background:#474747;border-radius:3px;"></div>
<div style="position:absolute;left:845px;top:340px;width:17.5px;height:18px;background:#474747;border-radius:3px;"></div>
<div style="position:absolute;left:794px;top:340px;width:23.5px;height:18px;background:#474747;border-radius:3px;"></div>
<div style="position:absolute;left:866px;top:340px;width:17.5px;height:18px;background:#262626;border-radius:3px;border:1px solid #555"></div>
<div style="position:absolute;left:890px;top:340px;width:17.5px;height:18px;background:#474747;border-radius:3px;"></div>
<div style="position:absolute;left:841px;top:344px;width:1px;height:9px;background:#666"></div>
<div style="position:absolute;left:886px;top:344px;width:1px;height:9px;background:#666"></div>
<svg style="left:734px;top:340px" width="18" height="18" viewBox="0 0 18 18"><path d="M4.5 3.5h5.5l3 3v8.5h-8.5z" stroke="#e0e0e0" stroke-width="1" fill="none"/></svg>
<svg style="left:754px;top:340px" width="18" height="18" viewBox="0 0 18 18"><path d="M4.5 3.5h5.5l3 3v8.5h-8.5z" stroke="#e0e0e0" stroke-width="1" fill="none"/><text x="6.3" y="12.8" font-size="7" fill="#e0e0e0" font-family="Liberation Sans">8</text></svg>
<svg style="left:774px;top:340px" width="18" height="18" viewBox="0 0 18 18"><path d="M4.5 3.5h5.5l3 3v8.5h-8.5z" stroke="#e0e0e0" stroke-width="1" fill="none"/><text x="6.5" y="12.8" font-size="7" fill="#e0e0e0" font-family="Liberation Sans">1</text></svg>
<svg style="left:794px;top:340px" width="24" height="18" viewBox="0 0 24 18"><path d="M3.5 3.5h5l2.5 2.5v4M3.5 3.5v11h4" stroke="#e0e0e0" stroke-width="1" fill="none"/><path d="M9.5 10v6M6.5 13h6" stroke="#e0e0e0" stroke-width="1.4"/><path d="M15 8h5l-2.5 3z" fill="#e0e0e0"/></svg>
<svg style="left:820px;top:340px" width="18" height="18" viewBox="0 0 18 18"><path d="M3 5h4.5l1 1.3h6.5v8H3z" fill="#e0e0e0"/></svg>
<svg style="left:845px;top:340px" width="18" height="18" viewBox="0 0 18 18"><rect x="3.5" y="6.5" width="7.5" height="7.5" stroke="#e0e0e0" stroke-width="1" fill="none"/><path d="M6 6.5V4h7.5v7.5H11" stroke="#e0e0e0" stroke-width="1" fill="none"/></svg>
<svg style="left:866px;top:340px" width="18" height="18" viewBox="0 0 18 18"><rect x="3" y="3" width="5" height="4" stroke="#e0e0e0" stroke-width="1" fill="none"/><rect x="3" y="10" width="5" height="4" fill="#e0e0e0"/><rect x="11" y="6.5" width="4.5" height="4" fill="#e0e0e0"/><path d="M8 5h1.5v7H8M9.5 8.5H11" stroke="#e0e0e0" stroke-width="0.8" fill="none"/></svg>
<svg style="left:890px;top:340px" width="18" height="18" viewBox="0 0 18 18"><path d="M4 5h10M7 5V3.5h4V5" stroke="#e0e0e0" stroke-width="1" fill="none"/><rect x="5" y="6" width="8" height="8.5" fill="#e0e0e0"/><path d="M7 7.5v5.5M9 7.5v5.5M11 7.5v5.5" stroke="#474747" stroke-width="0.8"/></svg>
<div style="position:absolute;left:729px;top:362px;width:295px;height:4px;background:#2a2522"></div>
<div style="position:absolute;left:729px;top:366px;width:295px;height:1px;background:#7f98ac"></div>
<div style="position:absolute;left:729px;top:367px;width:295px;height:15px;background:linear-gradient(#313740,#3b3535 45%,#393737)"></div>
<div style="position:absolute;left:846px;top:369.5px;font-size:10px;line-height:13px;color:#c8c8c8;white-space:pre;transform:scaleX(0.7961);transform-origin:0 0;">Brush Size</div>
<svg style="left:1001px;top:370px" width="20" height="8" viewBox="0 0 20 8"><path d="M4.5 1.5H1v6h6V4" stroke="#cfcfcf" stroke-width="1" fill="none"/><circle cx="7" cy="1.2" r="1" fill="#cfcfcf"/><path d="M13 1l6 6M19 1l-6 6" stroke="#d8d8d8" stroke-width="2"/></svg>
<div style="position:absolute;left:729px;top:382px;width:295px;height:148px;background:#4a4644"></div>
<div style="position:absolute;left:730px;top:382px;width:29px;height:37px;background:#5a5a5a"></div>
<div style="position:absolute;left:744.0px;top:396.0px;width:1px;height:1px;border-radius:50%;background:#f0f0f0"></div>
<div style="position:absolute;left:743.0px;top:409px;font-size:8px;line-height:11px;color:#f0f0f0;white-space:pre;transform:scaleX(0.6737);transform-origin:0 0;">1</div>
<div style="position:absolute;left:760px;top:382px;width:29px;height:37px;background:#5a5a5a"></div>
<div style="position:absolute;left:773.9px;top:395.9px;width:1.2px;height:1.2px;border-radius:50%;background:#f0f0f0"></div>
<div style="position:absolute;left:770.0px;top:409px;font-size:8px;line-height:11px;color:#f0f0f0;white-space:pre;transform:scaleX(0.8090);transform-origin:0 0;">1.5</div>
<div style="position:absolute;left:790px;top:382px;width:29px;height:37px;background:#5a5a5a"></div>
<div style="position:absolute;left:803.7px;top:395.7px;width:1.6px;height:1.6px;border-radius:50%;background:#f0f0f0"></div>
<div style="position:absolute;left:802.0px;top:409px;font-size:8px;line-height:11px;color:#f0f0f0;white-space:pre;transform:scaleX(1.1228);transform-origin:0 0;">2</div>
<div style="position:absolute;left:820px;top:382px;width:29px;height:37px;background:#5a5a5a"></div>
<div style="position:absolute;left:833.4px;top:395.4px;width:2.2px;height:2.2px;border-radius:50%;background:#f0f0f0"></div>
<div style="position:absolute;left:832.0px;top:409px;font-size:8px;line-height:11px;color:#f0f0f0;white-space:pre;transform:scaleX(1.1228);transform-origin:0 0;">3</div>
<div style="position:absolute;left:850px;top:382px;width:29px;height:37px;background:#5a5a5a"></div>
<div style="position:absolute;left:863.0px;top:395.0px;width:3px;height:3px;border-radius:50%;background:#f0f0f0"></div>
<div style="position:absolute;left:862.0px;top:409px;font-size:8px;line-height:11px;color:#f0f0f0;white-space:pre;transform:scaleX(1.1228);transform-origin:0 0;">4</div>
<div style="position:absolute;left:880px;top:382px;width:29px;height:37px;background:#5a5a5a"></div>
<div style="position:absolute;left:892.7px;top:394.7px;width:3.6px;height:3.6px;border-radius:50%;background:#f0f0f0"></div>
<div style="position:absolute;left:892.0px;top:409px;font-size:8px;line-height:11px;color:#f0f0f0;white-space:pre;transform:scaleX(1.1228);transform-origin:0 0;">5</div>
<div style="position:absolute;left:910px;top:382px;width:29px;height:37px;background:#5a5a5a"></div>
<div style="position:absolute;left:921.85px;top:393.85px;width:5.3px;height:5.3px;border-radius:50%;background:#f0f0f0"></div>
<div style="position:absolute;left:922.0px;top:409px;font-size:8px;line-height:11px;color:#f0f0f0;white-space:pre;transform:scaleX(1.1228);transform-origin:0 0;">7</div>
<div style="position:absolute;left:940px;top:382px;width:29px;height:37px;background:#5a5a5a"></div>
<div style="position:absolute;left:950.65px;top:392.65px;width:7.7px;height:7.7px;border-radius:50%;background:#f0f0f0"></div>
<div style="position:absolute;left:950.0px;top:409px;font-size:8px;line-height:11px;color:#f0f0f0;white-space:pre;transform:scaleX(1.0105);transform-origin:0 0;">10</div>
<div style="position:absolute;left:970px;top:382px;width:29px;height:37px;background:#5a5a5a"></div>
<div style="position:absolute;left:979.95px;top:391.95px;width:9.1px;height:9.1px;border-radius:50%;background:#f0f0f0"></div>
<div style="position:absolute;left:980.0px;top:409px;font-size:8px;line-height:11px;color:#f0f0f0;white-space:pre;transform:scaleX(1.0105);transform-origin:0 0;">12</div>
<div style="position:absolute;left:730px;top:420px;width:29px;height:37px;background:#5a5a5a"></div>
<div style="position:absolute;left:738.65px;top:428.15px;width:11.7px;height:11.7px;border-radius:50%;background:#f0f0f0"></div>
<div style="position:absolute;left:740.0px;top:447px;font-size:8px;line-height:11px;color:#f0f0f0;white-space:pre;transform:scaleX(1.0105);transform-origin:0 0;">15</div>
<div style="position:absolute;left:760px;top:420px;width:29px;height:37px;background:#5a5a5a"></div>
<div style="position:absolute;left:766.85px;top:426.35px;width:15.3px;height:15.3px;border-radius:50%;background:#f0f0f0"></div>
<div style="position:absolute;left:770.0px;top:447px;font-size:8px;line-height:11px;color:#f0f0f0;white-space:pre;transform:scaleX(1.0105);transform-origin:0 0;">20</div>
<div style="position:absolute;left:790px;top:420px;width:29px;height:37px;background:#5a5a5a"></div>
<div style="position:absolute;left:795.35px;top:424.85px;width:18.3px;height:18.3px;border-radius:50%;background:#f0f0f0"></div>
<div style="position:absolute;left:800.0px;top:447px;font-size:8px;line-height:11px;color:#f0f0f0;white-space:pre;transform:scaleX(1.0105);transform-origin:0 0;">25</div>
<div style="position:absolute;left:820px;top:420px;width:29px;height:37px;background:#5a5a5a"></div>
<div style="position:absolute;left:825.25px;top:424.75px;width:18.5px;height:18.5px;border-radius:50%;background:#f0f0f0"></div>
<div style="position:absolute;left:830.0px;top:447px;font-size:8px;line-height:11px;color:#f0f0f0;white-space:pre;transform:scaleX(1.0105);transform-origin:0 0;">30</div>
<div style="position:absolute;left:850px;top:420px;width:29px;height:37px;background:#5a5a5a"></div>
<div style="position:absolute;left:855.25px;top:424.75px;width:18.5px;height:18.5px;border-radius:50%;background:#f0f0f0"></div>
<div style="position:absolute;left:860.0px;top:447px;font-size:8px;line-height:11px;color:#f0f0f0;white-space:pre;transform:scaleX(1.0105);transform-origin:0 0;">40</div>
<div style="position:absolute;left:880px;top:420px;width:29px;height:37px;background:#5a5a5a"></div>
<div style="position:absolute;left:885.25px;top:424.75px;width:18.5px;height:18.5px;border-radius:50%;background:#f0f0f0"></div>
<div style="position:absolute;left:890.0px;top:447px;font-size:8px;line-height:11px;color:#f0f0f0;white-space:pre;transform:scaleX(1.0105);transform-origin:0 0;">50</div>
<div style="position:absolute;left:910px;top:420px;width:29px;height:37px;background:#5a5a5a"></div>
<div style="position:absolute;left:915.25px;top:424.75px;width:18.5px;height:18.5px;border-radius:50%;background:#f0f0f0"></div>
<div style="position:absolute;left:920.0px;top:447px;font-size:8px;line-height:11px;color:#f0f0f0;white-space:pre;transform:scaleX(1.0105);transform-origin:0 0;">70</div>
<div style="position:absolute;left:940px;top:420px;width:29px;height:37px;background:#5a5a5a"></div>
<div style="position:absolute;left:945.25px;top:424.75px;width:18.5px;height:18.5px;border-radius:50%;background:#f0f0f0"></div>
<div style="position:absolute;left:948.0px;top:447px;font-size:8px;line-height:11px;color:#f0f0f0;white-space:pre;transform:scaleX(0.9731);transform-origin:0 0;">100</div>
<div style="position:absolute;left:970px;top:420px;width:29px;height:37px;background:#5a5a5a"></div>
<div style="position:absolute;left:975.25px;top:424.75px;width:18.5px;height:18.5px;border-radius:50%;background:#f0f0f0"></div>
<div style="position:absolute;left:978.0px;top:447px;font-size:8px;line-height:11px;color:#f0f0f0;white-space:pre;transform:scaleX(0.9731);transform-origin:0 0;">150</div>
<div style="position:absolute;left:730px;top:458px;width:29px;height:36px;background:#5a5a5a"></div>
<div style="position:absolute;left:735.5px;top:463.0px;width:18px;height:18px;border-radius:50%;background:#f0f0f0"></div>
<div style="position:absolute;left:737.5px;top:485px;font-size:8px;line-height:11px;color:#f0f0f0;white-space:pre;transform:scaleX(1.0480);transform-origin:0 0;">200</div>
<div style="position:absolute;left:760px;top:458px;width:29px;height:36px;background:#5a5a5a"></div>
<div style="position:absolute;left:765.5px;top:463.0px;width:18px;height:18px;border-radius:50%;background:#f0f0f0"></div>
<div style="position:absolute;left:767.5px;top:485px;font-size:8px;line-height:11px;color:#f0f0f0;white-space:pre;transform:scaleX(1.0480);transform-origin:0 0;">300</div>
<div style="position:absolute;left:790px;top:458px;width:29px;height:36px;background:#5a5a5a"></div>
<div style="position:absolute;left:795.5px;top:463.0px;width:18px;height:18px;border-radius:50%;background:#f0f0f0"></div>
<div style="position:absolute;left:797.5px;top:485px;font-size:8px;line-height:11px;color:#f0f0f0;white-space:pre;transform:scaleX(1.0480);transform-origin:0 0;">400</div>
<div style="position:absolute;left:820px;top:458px;width:29px;height:36px;background:#5a5a5a"></div>
<div style="position:absolute;left:825.5px;top:463.0px;width:18px;height:18px;border-radius:50%;background:#f0f0f0"></div>
<div style="position:absolute;left:827.5px;top:485px;font-size:8px;line-height:11px;color:#f0f0f0;white-space:pre;transform:scaleX(1.0480);transform-origin:0 0;">500</div>
<div style="position:absolute;left:850px;top:458px;width:29px;height:36px;background:#5a5a5a"></div>
<div style="position:absolute;left:855.5px;top:463.0px;width:18px;height:18px;border-radius:50%;background:#f0f0f0"></div>
<div style="position:absolute;left:857.5px;top:485px;font-size:8px;line-height:11px;color:#f0f0f0;white-space:pre;transform:scaleX(1.0480);transform-origin:0 0;">700</div>
<div style="position:absolute;left:880px;top:458px;width:29px;height:36px;background:#5a5a5a"></div>
<div style="position:absolute;left:885.5px;top:463.0px;width:18px;height:18px;border-radius:50%;background:#f0f0f0"></div>
<div style="position:absolute;left:885.5px;top:485px;font-size:8px;line-height:11px;color:#f0f0f0;white-space:pre;transform:scaleX(1.0114);transform-origin:0 0;">1000</div>
<div style="position:absolute;left:1008px;top:382px;width:16px;height:148px;background:#3a3a3a"></div>
<svg style="left:1008px;top:382px" width="15" height="9" viewBox="0 0 15 9"><path d="M4.5 7.5h6l-3-5z" fill="#bbb"/></svg>
<div style="position:absolute;left:1009px;top:391px;width:14px;height:128px;background:linear-gradient(to right,#707070,#5a5a5a);border-radius:4px"></div>
<svg style="left:1008px;top:520px" width="15" height="9" viewBox="0 0 15 9"><path d="M4.5 1.5h6l-3 5z" fill="#bbb"/></svg>
<div style="position:absolute;left:804.5px;top:489px;font-size:14px;line-height:17px;color:rgba(255,255,255,0.34);white-space:pre;transform:scaleX(1.0590);transform-origin:0 0;">Activate Windows</div>
<div style="position:absolute;left:805px;top:506px;font-size:11px;line-height:14px;color:rgba(255,255,255,0.34);white-space:pre;transform:scaleX(1.0193);transform-origin:0 0;">Go to Settings to activate Windows.</div>
<div style="position:absolute;left:0px;top:530px;width:1024px;height:16px;background:#262626"></div>
<div style="position:absolute;left:5px;top:532px;font-size:9px;line-height:12px;color:#c4c4c4;white-space:pre;transform:scaleX(0.9318);transform-origin:0 0;">1080 * 1007 pixel   (38.1 * 35.5cm)   72 dpi   66 %   ( 1104, 962 )</div>
<div style="position:absolute;left:0px;top:546px;width:1024px;height:30px;background:linear-gradient(to right,#26363f,#25343d 50%,#222f37)"></div>
<svg style="left:11px;top:554px" width="14" height="14" viewBox="0 0 14 14"><path d="M0.5 2l5.5-.8v5.2H0.5zM7 1.1l6.5-1v6.3H7zM0.5 7.4H6v5.3l-5.5-.8zM7 7.4h6.5v6.4L7 12.9z" fill="#f2f2f2"/></svg>
<svg style="left:47px;top:554px" width="14" height="14" viewBox="0 0 14 14"><circle cx="8.3" cy="5.7" r="4.2" stroke="#f2f2f2" stroke-width="1.2" fill="none"/><path d="M5.3 8.7L1 13" stroke="#f2f2f2" stroke-width="1.3"/></svg>
<svg style="left:83px;top:554px" width="14" height="14" viewBox="0 0 14 14"><circle cx="7" cy="7" r="5.3" stroke="#f2f2f2" stroke-width="1.4" fill="none"/></svg>
<svg style="left:119px;top:554px" width="14" height="14" viewBox="0 0 14 14"><rect x="1" y="3.5" width="9" height="7" stroke="#f2f2f2" stroke-width="1.1" fill="none"/><path d="M1 1.3h9M1 12.7h9M12.3 1v1.5M12.3 4v9" stroke="#f2f2f2" stroke-width="1.1"/></svg>
<svg style="left:193px;top:553px" width="16" height="15" viewBox="0 0 16 15"><path d="M0.5 1.5h6l1.5 1.5h7.5v11H0.5z" fill="#e8b84a"/><path d="M0.5 5h15v9H0.5z" fill="#f7cf5a"/><rect x="3.5" y="8" width="9" height="6" fill="#2a8ad8"/></svg>
<svg style="left:266px;top:551px" width="20" height="20" viewBox="0 0 20 20"><circle cx="9" cy="9" r="7" fill="#8fd060"/><circle cx="8" cy="10" r="3.5" fill="#e8f4d0"/><path d="M10 3l3-1l1 3" stroke="#d04040" stroke-width="1.2" fill="none"/><circle cx="13" cy="14" r="4.5" fill="#f0a030"/><path d="M10.5 15l2-2.5l1.5 2l1.5-2" stroke="#d03020" stroke-width="1.2" fill="none"/></svg>
<div style="position:absolute;left:293px;top:546px;width:35px;height:30px;background:#3b4a55"></div>
<div style="position:absolute;left:302px;top:552px;width:17px;height:17px;border-radius:4px;background:#f4f4f4"></div>
<svg style="left:304px;top:554px" width="13" height="13" viewBox="0 0 13 13"><circle cx="6.5" cy="6.8" r="5.5" fill="#20b070"/><path d="M6.5 1.3a5.5 5.5 0 0 1 5.5 5.5H6.5z" fill="#e84a30"/><path d="M1 6.8a5.5 5.5 0 0 1 5.5-5.5v5.5z" fill="#f4b020"/><circle cx="7" cy="7.5" r="3" fill="#1878d0"/></svg>
<div style="position:absolute;left:260px;top:574px;width:32px;height:2px;background:#e6dcc8"></div>
<div style="position:absolute;left:293px;top:574px;width:35px;height:2px;background:#efe4d0"></div>
<svg style="left:766px;top:556px" width="12" height="8" viewBox="0 0 12 8"><path d="M1 7l5-5l5 5" stroke="#f2f2f2" stroke-width="1.2" fill="none"/></svg>
<svg style="left:788px;top:554px" width="16" height="13" viewBox="0 0 16 13"><rect x="4" y="4" width="11" height="7" stroke="#f2f2f2" stroke-width="1" fill="none"/><path d="M1 3.5h4M3 1.5v4M1 7h2" stroke="#f2f2f2" stroke-width="1"/></svg>
<svg style="left:815px;top:554px" width="13" height="13" viewBox="0 0 13 13"><path d="M1 12a11 11 0 0 1 11-11M3.5 12a8.5 8.5 0 0 1 8.5-8.5M6 12a6 6 0 0 1 6-6M8.5 12a3.5 3.5 0 0 1 3.5-3.5" stroke="#bbb" stroke-width="0.9" fill="none"/><circle cx="11" cy="11" r="1.2" fill="#f2f2f2"/></svg>
<div style="position:absolute;left:837px;top:553px;width:13px;height:13px;background:#f4d4d4"></div>
<div style="position:absolute;left:838.5px;top:552.5px;font-size:12px;line-height:15px;color:#e02020;white-space:pre;font-weight:bold;transform:scaleX(1.2476);transform-origin:0 0;">V</div>
<svg style="left:860px;top:554px" width="15" height="13" viewBox="0 0 15 13"><path d="M1 4.5h2.5L7 1.5v10L3.5 8.5H1z" stroke="#f2f2f2" stroke-width="1" fill="none"/><path d="M9 4.5a2.5 2.5 0 0 1 0 4M11 3a4.5 4.5 0 0 1 0 7" stroke="#f2f2f2" stroke-width="0.9" fill="none"/><path d="M13 1.5a6.5 6.5 0 0 1 0 10" stroke="#777" stroke-width="0.9" fill="none"/></svg>
<svg style="left:887px;top:553px" width="16" height="15" viewBox="0 0 16 15"><path d="M3 13.5c-1.5-1-1-3 .5-3.5M4 12l9-9l1.5 1.5l-9 9z" stroke="#f2f2f2" stroke-width="1.1" fill="none"/><path d="M9 4c2-1 4 0 3 2" stroke="#f2f2f2" stroke-width="1" fill="none"/></svg>
<div style="position:absolute;left:913px;top:554.5px;font-size:10px;line-height:13px;color:#f0f0f0;white-space:pre;transform:scaleX(0.8998);transform-origin:0 0;">ENG</div>
<div style="position:absolute;left:942.5px;top:547.5px;font-size:10px;line-height:13px;color:#f4f4f4;white-space:pre;transform:scaleX(0.8440);transform-origin:0 0;">11:22 PM</div>
<div style="position:absolute;left:941px;top:561.5px;font-size:9px;line-height:12px;color:#f4f4f4;white-space:pre;transform:scaleX(0.9489);transform-origin:0 0;">14/4/2021</div>
<svg style="left:992px;top:552px" width="20" height="20" viewBox="0 0 20 20"><path d="M1.5 1.5h13v10h-7l-3 3v-3h-3z" fill="#f2f2f2"/><path d="M4 4.5h8M4 7h8M4 9.5h6" stroke="#1d2b34" stroke-width="1"/><circle cx="13.5" cy="14.5" r="4.2" fill="#1d2b34" stroke="#f2f2f2" stroke-width="1"/><path d="M13.5 12.5v4.3M12.8 13.2l.7-.7" stroke="#f2f2f2" stroke-width="1"/></svg>
<div style="position:absolute;left:1021px;top:551px;width:1px;height:22px;background:#667"></div>
</div></body></html>
